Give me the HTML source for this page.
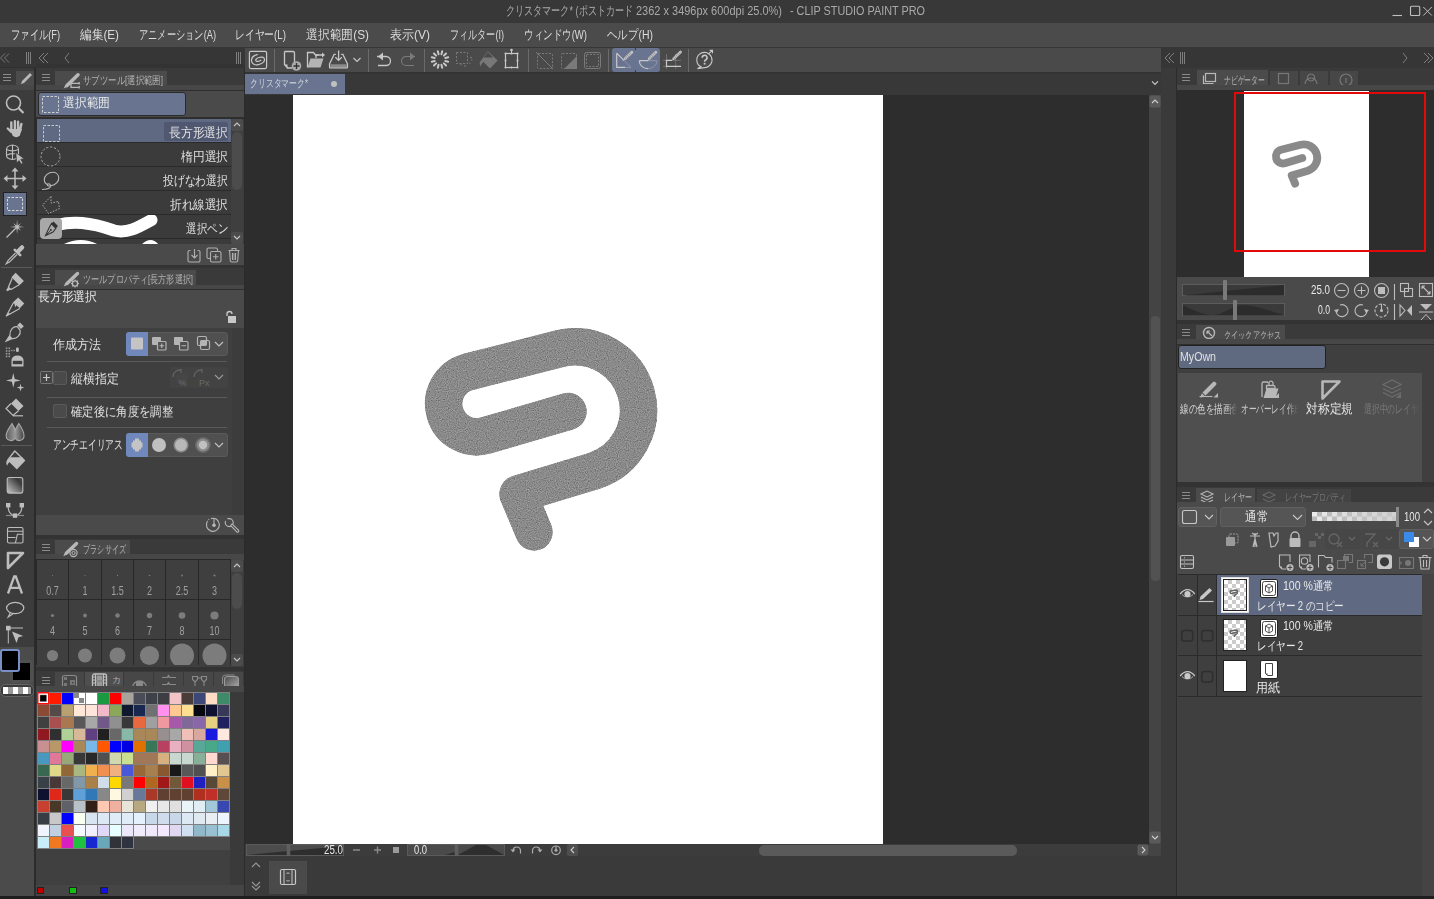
<!DOCTYPE html><html><head><meta charset="utf-8"><style>
*{margin:0;padding:0;box-sizing:border-box}
html,body{width:1434px;height:899px;overflow:hidden;background:#3c3c3c;font-family:"Liberation Sans",sans-serif}
.a{position:absolute}
.t{white-space:nowrap;line-height:1}
</style></head><body><div class="a" style="left:0px;top:0px;width:1434px;height:23px;background:#383838;"></div>
<div id="m1" class="a t" style="left:506px;top:4px;font-size:13px;color:#a9a9a9;transform:scaleX(0.698);transform-origin:0 0;">クリスタマーク* (ポストカード</div>
<div id="m2" class="a t" style="left:636px;top:4px;font-size:13px;color:#a9a9a9;transform:scaleX(0.845);transform-origin:0 0;">2362 x 3496px 600dpi 25.0%)</div>
<div id="m3" class="a t" style="left:790px;top:4px;font-size:13px;color:#a9a9a9;transform:scaleX(0.834);transform-origin:0 0;">- CLIP STUDIO PAINT PRO</div>
<svg class="a" style="left:1380px;top:0px;" width="54" height="23" viewBox="0 0 54 23"><path d="M12.5 15.5h9.5" stroke="#c0c0c0" stroke-width="1.1"/><rect x="30.5" y="6.3" width="9.2" height="9.2" rx="1" fill="none" stroke="#c0c0c0" stroke-width="1.1"/><path d="M43.3 7l8.5 8.5M51.8 7l-8.5 8.5" stroke="#c0c0c0" stroke-width="1"/></svg>
<div class="a" style="left:0px;top:23px;width:1434px;height:24px;background:#4b4b4b;"></div>
<div id="m4" class="a t" style="left:11px;top:28px;font-size:13px;color:#dcdcdc;transform:scaleX(0.714);transform-origin:0 0;">ファイル(F)</div>
<div id="m5" class="a t" style="left:80px;top:28px;font-size:13px;color:#dcdcdc;transform:scaleX(0.900);transform-origin:0 0;">編集(E)</div>
<div id="m6" class="a t" style="left:139px;top:28px;font-size:13px;color:#dcdcdc;transform:scaleX(0.711);transform-origin:0 0;">アニメーション(A)</div>
<div id="m7" class="a t" style="left:235px;top:28px;font-size:13px;color:#dcdcdc;transform:scaleX(0.751);transform-origin:0 0;">レイヤー(L)</div>
<div id="m8" class="a t" style="left:306px;top:28px;font-size:13px;color:#dcdcdc;transform:scaleX(0.909);transform-origin:0 0;">選択範囲(S)</div>
<div id="m9" class="a t" style="left:390px;top:28px;font-size:13px;color:#dcdcdc;transform:scaleX(0.923);transform-origin:0 0;">表示(V)</div>
<div id="m10" class="a t" style="left:450px;top:28px;font-size:13px;color:#dcdcdc;transform:scaleX(0.699);transform-origin:0 0;">フィルター(I)</div>
<div id="m11" class="a t" style="left:524px;top:28px;font-size:13px;color:#dcdcdc;transform:scaleX(0.733);transform-origin:0 0;">ウィンドウ(W)</div>
<div id="m12" class="a t" style="left:607px;top:28px;font-size:13px;color:#dcdcdc;transform:scaleX(0.806);transform-origin:0 0;">ヘルプ(H)</div>
<div class="a" style="left:0px;top:47px;width:1434px;height:21px;background:#363636;"></div>
<div class="a" style="left:0px;top:67px;width:245px;height:1px;background:#2f2f2f;"></div>
<div class="a" style="left:245px;top:48px;width:916px;height:24px;background:#4a4a4a;"></div>
<svg class="a" style="left:0px;top:50px;" width="60" height="16" viewBox="0 0 60 16"><path d="M5 3.5l-4.5 4.5 4.5 4.5M9 3.5l-4.5 4.5 4.5 4.5" fill="none" stroke="#7e7e7e" stroke-width="0.9"/><path d="M26.5 2v12M28.5 2v12M30.5 2v12" stroke="#7e7e7e" stroke-width="1"/><path d="M44 3l-5 5 5 5M48 3l-5 5 5 5" fill="none" stroke="#7e7e7e" stroke-width="1"/></svg>
<svg class="a" style="left:60px;top:50px;" width="20" height="16" viewBox="0 0 20 16"><path d="M9 3l-4 5 4 5" fill="none" stroke="#7e7e7e" stroke-width="1"/></svg>
<svg class="a" style="left:232px;top:50px;" width="14" height="16" viewBox="0 0 14 16"><path d="M4.5 2v12M6.5 2v12M8.5 2v12" stroke="#7e7e7e" stroke-width="1"/></svg>
<svg class="a" style="left:1161px;top:50px;" width="30" height="16" viewBox="0 0 30 16"><path d="M9 3l-5 5 5 5M13 3l-5 5 5 5" fill="none" stroke="#7e7e7e" stroke-width="1"/><path d="M19.5 2v12M21.5 2v12M23.5 2v12" stroke="#7e7e7e" stroke-width="1"/></svg>
<svg class="a" style="left:1396px;top:50px;" width="38" height="16" viewBox="0 0 38 16"><path d="M7 3l4 5-4 5" fill="none" stroke="#7e7e7e" stroke-width="1"/><path d="M28 3l5 5-5 5M32 3l5 5-5 5" fill="none" stroke="#7e7e7e" stroke-width="1"/></svg>
<div class="a" style="left:274px;top:49px;width:1px;height:23px;background:#6a6a6a;"></div>
<div class="a" style="left:368px;top:49px;width:1px;height:23px;background:#6a6a6a;"></div>
<div class="a" style="left:424px;top:49px;width:1px;height:23px;background:#6a6a6a;"></div>
<div class="a" style="left:528px;top:49px;width:1px;height:23px;background:#6a6a6a;"></div>
<div class="a" style="left:608px;top:49px;width:1px;height:23px;background:#6a6a6a;"></div>
<div class="a" style="left:688px;top:49px;width:1px;height:23px;background:#6a6a6a;"></div>
<div class="a" style="left:612px;top:48px;width:48px;height:24px;background:#687490;border-radius:3px;"></div>
<div class="a" style="left:635px;top:48px;width:1px;height:2px;background:#3a3a3a;"></div>
<div class="a" style="left:635px;top:70px;width:1px;height:2px;background:#3a3a3a;"></div>
<svg class="a" style="left:245px;top:47px;" width="30" height="25" viewBox="0 0 30 25"><rect x="4.4" y="4.3" width="17.2" height="17.3" rx="1.5" fill="none" stroke="#c8c8c8" stroke-width="1.2"/><path d="M12.3 7.6C8.5 8.5 6.3 11 6.5 13.8C6.8 16.8 9.5 18.2 12.5 17.8C16.5 17.2 19.8 15 19.5 12.3C19.2 10 16.5 9.6 14 10.5C11.5 11.3 10.2 12.7 11 13.8C11.8 14.8 14.5 14 15.8 13.2" fill="none" stroke="#c8c8c8" stroke-width="1.25" stroke-linecap="round"/></svg>
<svg class="a" style="left:280px;top:47px;" width="22" height="25" viewBox="0 0 22 25"><path d="M4.5 4.5h8.5a1.5 1.5 0 0 1 1.5 1.5v9M4.5 4.5v13l3 3.5h5" fill="none" stroke="#c8c8c8" stroke-width="1.3"/><path d="M4.5 17.5l3 3.5v-3.5z" fill="#c8c8c8"/><circle cx="16.5" cy="19" r="4.8" fill="#aaaaaa"/><path d="M16.5 16v6M13.5 19h6" stroke="#333" stroke-width="1.3"/></svg>
<svg class="a" style="left:304px;top:47px;" width="24" height="25" viewBox="0 0 24 25"><path d="M3.5 20.5v-15h6l2 2.5h3" fill="none" stroke="#c8c8c8" stroke-width="1.3"/><path d="M3.5 20.5l3-9h13l-3 9z" fill="#b4b4b4"/><path d="M12 11v-3h7" fill="none" stroke="#c8c8c8" stroke-width="1.3"/><path d="M18 5.5l3 2.5-3 2.5z" fill="#c8c8c8"/></svg>
<svg class="a" style="left:328px;top:47px;" width="22" height="25" viewBox="0 0 22 25"><path d="M7.8 7.4H6.1L1.5 17v3.3q0 .6.6.6h16.8q.6 0 .6-.6V17L14.9 7.4h-1.7" fill="none" stroke="#c8c8c8" stroke-width="1.2"/><rect x="2.3" y="17.3" width="16.6" height="2.8" fill="#8a8a8a"/><path d="M10.6 3.5v9.5" stroke="#c8c8c8" stroke-width="1.3"/><path d="M7.4 10.2l3.2 3.2 3.2-3.2" fill="none" stroke="#c8c8c8" stroke-width="1.3"/></svg>
<svg class="a" style="left:350px;top:47px;" width="14" height="25" viewBox="0 0 14 25"><path d="M3.5 11l3.5 3.5 3.5-3.5" fill="none" stroke="#c8c8c8" stroke-width="1.1"/></svg>
<svg class="a" style="left:372px;top:47px;" width="24" height="25" viewBox="0 0 24 25"><path d="M5 9.5h9a4.5 4.5 0 0 1 0 9h-8" fill="none" stroke="#c8c8c8" stroke-width="1.3"/><path d="M11 5.5l-5 4 5 4z" fill="#c8c8c8"/></svg>
<svg class="a" style="left:396px;top:47px;" width="24" height="25" viewBox="0 0 24 25"><path d="M19 9.5h-9a4.5 4.5 0 0 0 0 9h8" fill="none" stroke="#7a7a7a" stroke-width="1.1"/><path d="M14 5.5l5 4-5 4z" fill="#7a7a7a"/></svg>
<svg class="a" style="left:428px;top:47px;" width="24" height="25" viewBox="0 0 24 25"><path d="M17.31 13.92L20.21 14.70" stroke="#c8c8c8" stroke-width="2" stroke-linecap="round"/><path d="M15.89 16.39L18.01 18.51" stroke="#c8c8c8" stroke-width="2" stroke-linecap="round"/><path d="M13.42 17.81L14.20 20.71" stroke="#c8c8c8" stroke-width="2" stroke-linecap="round"/><path d="M10.58 17.81L9.80 20.71" stroke="#c8c8c8" stroke-width="2" stroke-linecap="round"/><path d="M8.11 16.39L5.99 18.51" stroke="#c8c8c8" stroke-width="2" stroke-linecap="round"/><path d="M6.69 13.92L3.79 14.70" stroke="#c8c8c8" stroke-width="2" stroke-linecap="round"/><path d="M6.69 11.08L3.79 10.30" stroke="#c8c8c8" stroke-width="2" stroke-linecap="round"/><path d="M8.11 8.61L5.99 6.49" stroke="#c8c8c8" stroke-width="2" stroke-linecap="round"/><path d="M10.58 7.19L9.80 4.29" stroke="#c8c8c8" stroke-width="2" stroke-linecap="round"/><path d="M13.42 7.19L14.20 4.29" stroke="#c8c8c8" stroke-width="2" stroke-linecap="round"/><path d="M15.89 8.61L18.01 6.49" stroke="#c8c8c8" stroke-width="2" stroke-linecap="round"/><path d="M17.31 11.08L20.21 10.30" stroke="#c8c8c8" stroke-width="2" stroke-linecap="round"/></svg>
<svg class="a" style="left:452px;top:47px;" width="24" height="25" viewBox="0 0 24 25"><rect x="4.5" y="5.5" width="11" height="11" fill="none" stroke="#7a7a7a" stroke-dasharray="2 1.5"/><path d="M18 10.5h2M17 15.5l1.5 1.5M13 18v2M9.5 17l-1 1.5M19 13h1.5" stroke="#7a7a7a" stroke-width="1"/></svg>
<svg class="a" style="left:476px;top:47px;" width="24" height="25" viewBox="0 0 24 25"><path d="M11.8 4L21.6 13.6 14 21.6 5.5 13z" fill="#787878"/><path d="M7.8 10.5H17.2L11.8 4.8z" fill="#4a4a4a"/><path d="M6 12.5c-2.5 1.5-3 4.5-1.5 7 0.6-2 1.8-3.6 3.2-4.4z" fill="#787878"/></svg>
<svg class="a" style="left:500px;top:47px;" width="24" height="25" viewBox="0 0 24 25"><rect x="5.5" y="6.5" width="12" height="14" fill="none" stroke="#c8c8c8" stroke-width="1.2"/><path d="M11.5 6.5v-3" stroke="#c8c8c8"/><g fill="#c8c8c8"><circle cx="11.5" cy="3" r="1.3"/><circle cx="5.5" cy="6.5" r="1"/><circle cx="17.5" cy="6.5" r="1"/><circle cx="5.5" cy="20.5" r="1"/><circle cx="17.5" cy="20.5" r="1"/><circle cx="11.5" cy="6.5" r="1"/><circle cx="11.5" cy="20.5" r="1"/><circle cx="5.5" cy="13.5" r="1"/><circle cx="17.5" cy="13.5" r="1"/></g></svg>
<svg class="a" style="left:532px;top:47px;" width="24" height="25" viewBox="0 0 24 25"><rect x="5.5" y="6.5" width="15" height="15" rx="1" fill="none" stroke="#7a7a7a" stroke-dasharray="2 1.5"/><path d="M4 5l17 17" stroke="#7a7a7a" stroke-width="1"/></svg>
<svg class="a" style="left:556px;top:47px;" width="24" height="25" viewBox="0 0 24 25"><rect x="5.5" y="6.5" width="15" height="15" rx="1" fill="none" stroke="#7a7a7a" stroke-dasharray="2 1.5"/><path d="M21 9v13h-13z" fill="#7a7a7a"/></svg>
<svg class="a" style="left:580px;top:47px;" width="24" height="25" viewBox="0 0 24 25"><rect x="4.5" y="5.5" width="16" height="16" rx="2" fill="none" stroke="#7a7a7a"/><rect x="6.5" y="7.5" width="12" height="12" fill="none" stroke="#7a7a7a" stroke-dasharray="2 1.5"/></svg>
<svg class="a" style="left:612px;top:47px;" width="24" height="25" viewBox="0 0 24 25"><path d="M4.7 6.2v14.2h8.3M4.7 6.2l7 7" fill="none" stroke="#c8c8c8" stroke-width="1.2"/><path d="M11.7 13.2l7.3 7.2h-6" fill="none" stroke="#aab" stroke-width="0.6"/><path d="M13.2 11.5L19.8 5.2" stroke="#c8c8c8" stroke-width="2.8" stroke-linecap="round"/><path d="M13.2 11.5L19.8 5.2" stroke="#8a8a8a" stroke-width="2.8" stroke-dasharray="0.6 1.2"/><path d="M12.399999999999999 12.3l-1.5 1.5" stroke="#c8c8c8" stroke-width="1"/></svg>
<svg class="a" style="left:636px;top:47px;" width="24" height="25" viewBox="0 0 24 25"><path d="M3.3 13.7h9M3.3 13.7a8.8 8 0 0 0 8.8 8" fill="none" stroke="#c8c8c8" stroke-width="1.2"/><path d="M12 13.7h8.9a8.8 8 0 0 1-8.8 8" fill="none" stroke="#aab" stroke-width="0.6"/><path d="M13.3 11.5L19.8 5.2" stroke="#c8c8c8" stroke-width="2.8" stroke-linecap="round"/><path d="M13.3 11.5L19.8 5.2" stroke="#8a8a8a" stroke-width="2.8" stroke-dasharray="0.6 1.2"/><path d="M12.5 12.3l-1.5 1.5" stroke="#c8c8c8" stroke-width="1"/></svg>
<svg class="a" style="left:660px;top:47px;" width="24" height="25" viewBox="0 0 24 25"><path d="M6.5 7v15M15.7 7v15M3 13.3h18M3 19.4h18" stroke="#8a8a8a" stroke-width="0.6"/><path d="M12 13.3H6.5v6.1H21" fill="none" stroke="#c8c8c8" stroke-width="1.2"/><path d="M13.8 11.5L20.5 5" stroke="#c8c8c8" stroke-width="2.8" stroke-linecap="round"/><path d="M13.8 11.5L20.5 5" stroke="#8a8a8a" stroke-width="2.8" stroke-dasharray="0.6 1.2"/><path d="M13.0 12.3l-1.5 1.5" stroke="#c8c8c8" stroke-width="1"/></svg>
<svg class="a" style="left:692px;top:47px;" width="24" height="25" viewBox="0 0 24 25"><path d="M9 19.8A7.6 7.6 0 1 1 12.6 20.6L5.5 21.6z" fill="none" stroke="#c8c8c8" stroke-width="1.1"/><path d="M10.2 10.8a2.4 2.4 0 1 1 3.4 2.1c-0.7 0.4-1 0.9-1 1.8" fill="none" stroke="#c8c8c8" stroke-width="1.6"/><rect x="11.7" y="15.8" width="1.8" height="1.8" fill="#c8c8c8"/><path d="M16.2 7.2l4-3.6M17.7 3.4h2.8v2.8" fill="none" stroke="#c8c8c8" stroke-width="1.1"/></svg>
<div class="a" style="left:0px;top:68px;width:34px;height:831px;background:#3c3c3c;"></div>
<div class="a" style="left:0px;top:68px;width:34px;height:17px;background:#3a3a3a;"></div>
<div class="a" style="left:16px;top:71px;width:18px;height:14px;background:#4b4b4b;"></div>
<div class="a" style="left:0px;top:85px;width:34px;height:5px;background:#474747;"></div>
<div class="a" style="left:34px;top:68px;width:2px;height:831px;background:#2b2b2b;"></div>
<div class="a" style="left:36px;top:68px;width:208px;height:831px;background:#3c3c3c;"></div>
<div class="a" style="left:244px;top:68px;width:1px;height:831px;background:#2b2b2b;"></div>
<svg class="a" style="left:3px;top:74px;" width="9" height="8" viewBox="0 0 9 8"><path d="M0 0.5h8M0 3.5h8M0 6.5h8" stroke="#8a8a8a" stroke-width="1"/></svg>
<svg class="a" style="left:16px;top:71px;" width="18" height="14" viewBox="0 0 18 14"><path d="M5 13l1-3 8-8 2 2-8 8z" fill="#b8b8b8"/></svg>
<svg class="a" style="left:0px;top:90px;" width="34" height="28" viewBox="0 0 34 28"><circle cx="13.5" cy="13" r="7" fill="none" stroke="#bdbdbd" stroke-width="1.6"/><path d="M18.5 18l5 5" stroke="#bdbdbd" stroke-width="2.2"/></svg>
<svg class="a" style="left:0px;top:116px;" width="34" height="24" viewBox="0 0 34 24"><g stroke="#bdbdbd" stroke-width="2.4" stroke-linecap="round"><path d="M11.3 6.5v8M14.9 5.2v8M18.1 5.7v8M21.4 8l-1.5 6.5M7.8 12.5l3.5 3.5"/></g><path d="M10 13h12l-2.2 6.5q-1.5 1.8-3.6 1.8t-3.6-1.8z" fill="#bdbdbd"/></svg>
<svg class="a" style="left:0px;top:141px;" width="34" height="26" viewBox="0 0 34 26"><g fill="none" stroke="#bdbdbd" stroke-width="1.1"><path d="M6.5 8.5Q6.5 4.8 12.5 4Q18.5 4.8 18.5 8.5V14.5Q18.5 17.8 12.5 18.5Q6.5 17.8 6.5 14.5Z"/><path d="M12.5 4V18.5M6.5 8.5Q12.5 11.2 18.5 8.5M7 14Q11 12.2 15 12.8"/></g><path d="M15.8 11.5L24.2 17.8 20.8 18.4 23 22 21.2 23.2 19 19.6 16.6 22z" fill="#bdbdbd" stroke="#3c3c3c" stroke-width="0.8"/></svg>
<svg class="a" style="left:0px;top:166px;" width="34" height="26" viewBox="0 0 34 26"><path d="M15 3v19M5 12.5h20" stroke="#bdbdbd" stroke-width="1.5"/><path d="M15 1.5l-3.5 4h7zM15 23.5l-3.5-4h7zM3.5 12.5l4-3.5v7zM26.5 12.5l-4-3.5v7z" fill="#bdbdbd"/></svg>
<div class="a" style="left:3px;top:192px;width:24px;height:24px;background:#687490;border:1px solid #222;"></div>
<svg class="a" style="left:3px;top:192px;" width="24" height="24" viewBox="0 0 24 24"><rect x="4.5" y="5.5" width="15" height="13" fill="none" stroke="#d8d8d8" stroke-dasharray="2.5 1.5"/></svg>
<svg class="a" style="left:0px;top:217px;" width="34" height="26" viewBox="0 0 34 26"><path d="M6.5 20.5l8.5-8.5" stroke="#bdbdbd" stroke-width="1.3"/><polygon points="17.10,2.70 17.71,8.42 21.06,5.94 18.58,9.29 24.30,9.90 18.58,10.51 21.06,13.86 17.71,11.38 17.10,17.10 16.49,11.38 13.14,13.86 15.62,10.51 9.90,9.90 15.62,9.29 13.14,5.94 16.49,8.42" fill="#bdbdbd"/></svg>
<svg class="a" style="left:0px;top:242px;" width="34" height="26" viewBox="0 0 34 26"><path d="M18 9.5l4-4" stroke="#bdbdbd" stroke-width="4.5" stroke-linecap="round"/><path d="M14.8 7.8l5.4 5.4" stroke="#bdbdbd" stroke-width="2.6" stroke-linecap="round"/><path d="M15.5 11L8.2 18.3 6.3 21.7 9.7 19.8 17 12.5" fill="none" stroke="#bdbdbd" stroke-width="1.2"/></svg>
<div class="a" style="left:1px;top:267px;width:31px;height:1px;background:#5a5a5a;"></div>
<svg class="a" style="left:0px;top:269px;" width="34" height="25" viewBox="0 0 34 25"><path d="M15.6 3.8L23.9 12 19.5 16.2 11.4 8.2z" fill="#bdbdbd"/><path d="M12.2 9.3L8.4 18.2 11 20.4 19.2 15.8" fill="none" stroke="#bdbdbd" stroke-width="1.2"/><path d="M8.2 18L6.2 21 7.2 22.2 10.8 20.6z" fill="#bdbdbd"/></svg>
<svg class="a" style="left:0px;top:294px;" width="34" height="25" viewBox="0 0 34 25"><path d="M18.2 3.5L24.3 9.6 19.8 14.2 16.4 11.2 15.2 13.2 14.4 9.8 12.8 8.6z" fill="#bdbdbd"/><path d="M13.4 8.8L6.3 22 19.8 14.4" fill="none" stroke="#bdbdbd" stroke-width="1.2" stroke-linejoin="round"/><path d="M8.5 18.5L6.3 22 10 20z" fill="#bdbdbd"/></svg>
<svg class="a" style="left:0px;top:319px;" width="34" height="25" viewBox="0 0 34 25"><path d="M20 3.5l3.8 3.8-2.8 2.8-3.8-3.8z" fill="#bdbdbd"/><path d="M17.5 7.8c-4-1-8 3-7.6 8.5l-3.8 5.8 6.2-2.6c5 0.4 8.7-4 7.8-8.2z" fill="none" stroke="#bdbdbd" stroke-width="1.2"/><path d="M9.8 16.4l-3.8 5.8 6.4-2.7-1-1.6z" fill="#bdbdbd"/></svg>
<svg class="a" style="left:0px;top:344px;" width="34" height="25" viewBox="0 0 34 25"><g fill="#9a9a9a"><rect x="5.8" y="3.5" width="1.6" height="1.6"/><rect x="8.5" y="3.5" width="1.6" height="1.6"/><rect x="5.8" y="6.2" width="1.6" height="1.6"/><rect x="8.5" y="6.2" width="1.6" height="1.6"/><rect x="5.8" y="8.9" width="1.6" height="1.6"/><rect x="8.5" y="8.9" width="1.6" height="1.6"/><rect x="5.8" y="11.6" width="1.6" height="1.6"/><rect x="8.5" y="11.6" width="1.6" height="1.6"/><rect x="11.2" y="5.8" width="1.4" height="1.4"/><rect x="13.5" y="5.8" width="1.4" height="1.4"/></g><rect x="16" y="3.5" width="2.8" height="4.5" rx="1.2" fill="#bdbdbd"/><path d="M11.5 22.5V16a6 4.5 0 0 1 12 0v6.5z" fill="#bdbdbd"/><rect x="12.8" y="16.8" width="9.4" height="3.4" fill="#3c3c3c"/></svg>
<svg class="a" style="left:0px;top:369px;" width="34" height="26" viewBox="0 0 34 26"><polygon points="13.30,4.00 14.71,9.99 20.70,11.40 14.71,12.81 13.30,18.80 11.89,12.81 5.90,11.40 11.89,9.99" fill="#bdbdbd"/><polygon points="20.50,14.80 21.35,17.75 24.30,18.60 21.35,19.45 20.50,22.40 19.65,19.45 16.70,18.60 19.65,17.75" fill="#bdbdbd"/></svg>
<svg class="a" style="left:0px;top:394px;" width="34" height="25" viewBox="0 0 34 25"><path d="M16 4.5L23.5 12 18.5 17 11 9.5z" fill="#bdbdbd"/><path d="M11 9.5L6 14.5 13 21.5 18.5 16.8" fill="none" stroke="#bdbdbd" stroke-width="1.2"/><path d="M13 21.8h10" stroke="#bdbdbd" stroke-width="1.2"/></svg>
<svg class="a" style="left:0px;top:419px;" width="34" height="26" viewBox="0 0 34 26"><defs><linearGradient id="bl" x1="0" x2="1"><stop offset="0" stop-color="#5a5a5a"/><stop offset="0.5" stop-color="#999"/><stop offset="1" stop-color="#444"/></linearGradient></defs><path d="M6.2 16.5C6.2 12.5 9.5 8.5 12 4.5C13.5 7.5 15 9.5 15.2 11C15.8 9.5 17 7.5 18.8 4.5C21.5 8.5 24 12.5 24 16.5A4.8 4.8 0 0 1 15.1 19.2A4.8 4.8 0 0 1 6.2 16.5z" fill="url(#bl)" stroke="#a8a8a8" stroke-width="1.1"/></svg>
<div class="a" style="left:1px;top:445px;width:31px;height:1px;background:#5a5a5a;"></div>
<svg class="a" style="left:0px;top:446px;" width="34" height="26" viewBox="0 0 34 26"><path d="M14.8 5L24.5 14.5 16.8 22.5 8 13.7z" fill="none" stroke="#bdbdbd" stroke-width="1.3" stroke-linejoin="round"/><path d="M10.6 11.3H22.2L24.5 14.5 16.8 22.5 8 13.7z" fill="#bdbdbd"/><path d="M8.5 13c-2.5 1.5-2.8 4.5-1.4 6.8 0.6-2 1.8-3.6 3.2-4.4z" fill="#bdbdbd"/></svg>
<svg class="a" style="left:0px;top:472px;" width="34" height="26" viewBox="0 0 34 26"><defs><linearGradient id="gr" x1="0" y1="1" x2="1" y2="0"><stop offset="0" stop-color="#c8c8c8"/><stop offset="0.75" stop-color="#3a3a3a"/><stop offset="1" stop-color="#505050"/></linearGradient></defs><rect x="7.2" y="5.5" width="15.6" height="15.6" rx="2" fill="url(#gr)" stroke="#bdbdbd" stroke-width="1.1"/></svg>
<svg class="a" style="left:0px;top:497px;" width="34" height="26" viewBox="0 0 34 26"><path d="M8.2 10c0 5 3 8.5 6.8 8.8 3.8-0.3 6.8-3.8 6.8-8.8" fill="none" stroke="#bdbdbd" stroke-width="1.2"/><rect x="6" y="6" width="4.4" height="4.4" fill="#bdbdbd"/><rect x="19.6" y="6" width="4.4" height="4.4" fill="#bdbdbd"/><path d="M6 18.5h18" stroke="#8a8a8a" stroke-width="1.2"/><rect x="12.8" y="16.4" width="4.4" height="4.4" fill="#bdbdbd"/></svg>
<svg class="a" style="left:0px;top:522px;" width="34" height="26" viewBox="0 0 34 26"><rect x="7.5" y="5.5" width="15.5" height="15.5" rx="1.5" fill="none" stroke="#bdbdbd" stroke-width="1.1"/><path d="M7.5 9.2h15.5M7.5 15.5h8M16.8 12.2h6.2M17.4 12.2l-2 8.8" fill="none" stroke="#bdbdbd" stroke-width="1.1"/></svg>
<svg class="a" style="left:0px;top:547px;" width="34" height="26" viewBox="0 0 34 26"><path d="M8 6h15L8 21z" fill="none" stroke="#bdbdbd" stroke-width="2.6" stroke-linejoin="round"/></svg>
<svg class="a" style="left:0px;top:572px;" width="34" height="26" viewBox="0 0 34 26"><path d="M8 21.5L14.2 4.5h1.6L22 21.5M10.4 15.8h9.2" fill="none" stroke="#bdbdbd" stroke-width="2.3"/></svg>
<svg class="a" style="left:0px;top:597px;" width="34" height="25" viewBox="0 0 34 25"><ellipse cx="15.2" cy="11" rx="8.6" ry="5.6" fill="none" stroke="#bdbdbd" stroke-width="1.2"/><path d="M10.5 15.5L8.2 20 13.5 16.5" fill="none" stroke="#bdbdbd" stroke-width="1.2"/></svg>
<svg class="a" style="left:0px;top:622px;" width="34" height="25" viewBox="0 0 34 25"><rect x="6" y="3.8" width="4.6" height="4.6" fill="#bdbdbd"/><path d="M8.3 6h14.7M8.3 6v15.5" stroke="#bdbdbd" stroke-width="1"/><path d="M12 9.5L23.2 14 18.5 15.2 16.5 21z" fill="#bdbdbd"/></svg>
<div class="a" style="left:0px;top:647px;width:34px;height:249px;background:#4b4b4b;"></div>
<div class="a" style="left:10px;top:660px;width:23px;height:23px;background:#000;border:3px solid #505050;border-radius:3px;"></div>
<div class="a" style="left:0px;top:649px;width:20px;height:23px;background:#000;border:2px solid #7890c8;border-radius:3px;"></div>
<svg class="a" style="left:0px;top:684px;" width="34" height="13" viewBox="0 0 34 13"><rect x="0.5" y="0.5" width="33" height="12" rx="5" fill="#3a3a3a" stroke="#666"/><g fill="#fff"><rect x="3" y="3" width="5" height="7"/><rect x="13" y="3" width="5" height="7"/><rect x="23" y="3" width="5" height="7"/></g><g fill="#999"><rect x="8" y="3" width="5" height="7"/><rect x="18" y="3" width="5" height="7"/><rect x="28" y="3" width="3" height="7"/></g></svg>
<div class="a" style="left:36px;top:64px;width:208px;height:4px;background:#333333;"></div>
<div class="a" style="left:36px;top:68px;width:208px;height:17px;background:#3a3a3a;"></div>
<svg class="a" style="left:42px;top:74px;" width="9" height="8" viewBox="0 0 9 8"><path d="M0 0.5h8M0 3.5h8M0 6.5h8" stroke="#8a8a8a" stroke-width="1"/></svg>
<div class="a" style="left:36px;top:85px;width:208px;height:5px;background:#474747;"></div>
<div class="a" style="left:55px;top:71px;width:112px;height:14px;background:#4b4b4b;"></div>
<svg class="a" style="left:58px;top:71px;" width="24" height="18" viewBox="0 0 24 18"><path d="M9 14.5L20 3.8" stroke="#b8b8b8" stroke-width="3.6" stroke-linecap="round"/><path d="M5.6 17.6L7.5 13.8 9.6 15.8z" fill="#b8b8b8"/><path d="M13 12.3h8.5M13 16.3h8.5M21.2 11v2.6M21.2 15v2.6M13 12v5" stroke="#b8b8b8" stroke-width="1.3"/></svg>
<div id="m13" class="a t" style="left:83px;top:75px;font-size:10.5px;color:#b4b4b4;transform:scaleX(0.763);transform-origin:0 0;">サブツール[選択範囲]</div>
<div class="a" style="left:36px;top:90px;width:208px;height:27px;background:#4a4a4a;"></div>
<div class="a" style="left:36px;top:90px;width:208px;height:1px;background:#2e2e2e;"></div>
<div class="a" style="left:38px;top:92px;width:148px;height:24px;background:#687490;border:1px solid #2a2a2a;border-radius:3px;"></div>
<svg class="a" style="left:42px;top:96px;" width="17" height="17" viewBox="0 0 17 17"><rect x="0.5" y="0.5" width="16" height="16" fill="none" stroke="#d0d0d0" stroke-dasharray="2.5 1.5"/></svg>
<div id="m14" class="a t" style="left:63px;top:96px;font-size:13px;color:#e8e8e8;transform:scaleX(0.904);transform-origin:0 0;">選択範囲</div>
<div class="a" style="left:36px;top:117px;width:208px;height:2px;background:#2e2e2e;"></div>
<div class="a" style="left:36px;top:119px;width:195px;height:125px;background:#2a2a2a;"></div>
<div class="a" style="left:37px;top:119px;width:194px;height:23px;background:#5f6a82;"></div>
<div class="a" style="left:164px;top:122px;width:64px;height:19px;background:#4f5870;border-radius:2px;"></div>
<div id="m15" class="a t" style="left:169px;top:127px;font-size:12.5px;color:#e0e0e0;transform:scaleX(0.908);transform-origin:0 0;">長方形選択</div>
<div class="a" style="left:37px;top:143px;width:194px;height:23px;background:#3b3b3b;"></div>
<div id="m16" class="a t" style="left:181px;top:151px;font-size:12.5px;color:#e0e0e0;transform:scaleX(0.904);transform-origin:0 0;">楕円選択</div>
<div class="a" style="left:37px;top:167px;width:194px;height:23px;background:#3b3b3b;"></div>
<div id="m17" class="a t" style="left:163px;top:175px;font-size:12.5px;color:#e0e0e0;transform:scaleX(0.833);transform-origin:0 0;">投げなわ選択</div>
<div class="a" style="left:37px;top:191px;width:194px;height:23px;background:#3b3b3b;"></div>
<div id="m18" class="a t" style="left:170px;top:199px;font-size:12.5px;color:#e0e0e0;transform:scaleX(0.892);transform-origin:0 0;">折れ線選択</div>
<div class="a" style="left:37px;top:215px;width:194px;height:23px;background:#3b3b3b;"></div>
<div id="m19" class="a t" style="left:186px;top:223px;font-size:12.5px;color:#e0e0e0;transform:scaleX(0.808);transform-origin:0 0;">選択ペン</div>
<div class="a" style="left:37px;top:239px;width:194px;height:5px;background:#3b3b3b;"></div>
<svg class="a" style="left:40px;top:122px;" width="22" height="20" viewBox="0 0 22 20"><rect x="3.5" y="3.5" width="16" height="16" fill="none" stroke="#c8c8c8" stroke-dasharray="2.5 1.5"/></svg>
<svg class="a" style="left:40px;top:146px;" width="22" height="22" viewBox="0 0 22 22"><circle cx="10.5" cy="10.5" r="9.5" fill="none" stroke="#aaa" stroke-dasharray="2.3 1.7"/></svg>
<svg class="a" style="left:40px;top:170px;" width="24" height="22" viewBox="0 0 24 22"><path d="M2 19.5C6 19.5 9.5 18.8 10.5 16.8C11.5 14.6 8.8 12.9 7.6 14.4C6.5 15.9 9.2 16.2 11 15.8C15.5 14.8 19 11.5 18.8 7.8C18.5 4 15.5 2.3 12.8 2.3C8.5 2.3 4.5 5.5 4.3 9.5C4.2 12 5.5 13.8 7.6 14.4" fill="none" stroke="#b8b8b8" stroke-width="1.1"/></svg>
<svg class="a" style="left:40px;top:194px;" width="24" height="22" viewBox="0 0 24 22"><path d="M11 2.5V9L18.5 7.5 19.5 14.5 8.5 19.5 2.5 11z" fill="none" stroke="#aaa" stroke-width="1" stroke-dasharray="1.6 1.4"/></svg>
<div class="a" style="left:37px;top:215px;width:194px;height:29px;overflow:hidden">
<svg class="a" style="left:0;top:0" width="194" height="29" viewBox="0 0 194 29"><path d="M20 10C36 6 52 7 77 15.5C90 19 102 12 114.5 5" fill="none" stroke="#fff" stroke-width="12" stroke-linecap="round"/><path d="M25 30Q44 20 62 30zM104 30Q114 20 122 30z" fill="#fff"/><rect x="3" y="3" width="22" height="21" rx="4" fill="#a8a8a8"/><path d="M3 18l7-7" stroke="#c0c0c0" stroke-width="0"/><path d="M16.5 6.5l4.5 4.5-2.5 2.5-4.5-4.5z" fill="#333"/><path d="M14.5 8.5l4.5 4.5-3 4-7.5 3.5 3.5-7.5z" fill="none" stroke="#333" stroke-width="1.1"/><path d="M8.5 20.5l5-5" stroke="#333" stroke-width="0.9"/><circle cx="13.8" cy="15" r="1" fill="#333"/></svg>
</div>
<div class="a" style="left:231px;top:119px;width:12px;height:125px;background:#3f3f3f;"></div>
<svg class="a" style="left:231px;top:119px;" width="12" height="12" viewBox="0 0 12 12"><rect x="0" y="0" width="12" height="12" rx="2" fill="#4c4c4c"/><path d="M3 7l3-3 3 3" fill="none" stroke="#c8c8c8" stroke-width="1.1"/></svg>
<div class="a" style="left:232px;top:132px;width:10px;height:58px;background:#4c4c4c;border-radius:5px;"></div>
<svg class="a" style="left:231px;top:232px;" width="12" height="12" viewBox="0 0 12 12"><rect x="0" y="0" width="12" height="12" rx="2" fill="#4c4c4c"/><path d="M3 4l3 3 3-3" fill="none" stroke="#c8c8c8" stroke-width="1.1"/></svg>
<div class="a" style="left:36px;top:244px;width:208px;height:21px;background:#4a4a4a;"></div>
<svg class="a" style="left:186px;top:247px;" width="56" height="18" viewBox="0 0 56 18"><g fill="none" stroke="#b0b0b0" stroke-width="1.1"><path d="M4.5 3.5h-1a1.5 1.5 0 0 0-1.5 1.5v8.5a1.5 1.5 0 0 0 1.5 1.5h9a1.5 1.5 0 0 0 1.5-1.5V5a1.5 1.5 0 0 0-1.5-1.5h-1"/><path d="M8.5 2v9M5.5 8l3 3 3-3"/><path d="M24 11.5h-1.5a1.5 1.5 0 0 1-1.5-1.5V2.5a1.5 1.5 0 0 1 1.5-1.5h7.5a1.5 1.5 0 0 1 1.5 1.5V4"/><rect x="24.5" y="4.5" width="10.5" height="10.5" rx="1.5"/><path d="M29.75 7v5.5M27 9.75h5.5"/><path d="M42.5 3.5h11M46 3.5V1.5h4v2M43.5 3.5l0.8 10a1.5 1.5 0 0 0 1.5 1.5h4.4a1.5 1.5 0 0 0 1.5-1.5l0.8-10M46.5 6v7M49.5 6v7"/></g><rect x="47.3" y="6" width="1.4" height="7" fill="#888"/></svg>
<div class="a" style="left:36px;top:265px;width:208px;height:4px;background:#333333;"></div>
<div class="a" style="left:36px;top:268px;width:208px;height:17px;background:#3a3a3a;"></div>
<svg class="a" style="left:42px;top:274px;" width="9" height="8" viewBox="0 0 9 8"><path d="M0 0.5h8M0 3.5h8M0 6.5h8" stroke="#8a8a8a" stroke-width="1"/></svg>
<div class="a" style="left:36px;top:285px;width:208px;height:5px;background:#474747;"></div>
<div class="a" style="left:55px;top:270px;width:141px;height:15px;background:#4b4b4b;"></div>
<svg class="a" style="left:58px;top:270px;" width="24" height="18" viewBox="0 0 24 18"><path d="M9 13.5L19.5 3.5" stroke="#b8b8b8" stroke-width="3.4" stroke-linecap="round"/><path d="M5.6 16.6L7.5 12.8 9.6 14.8z" fill="#b8b8b8"/><circle cx="17" cy="13.5" r="2.6" fill="none" stroke="#b8b8b8" stroke-width="1.4"/><path d="M17 9.5v1.2M17 16.3v1.2M13 13.5h1.2M19.8 13.5h1.2M14.2 10.7l.8.8M19 15.5l.8.8M14.2 16.3l.8-.8M19 11.5l.8-.8" stroke="#b8b8b8" stroke-width="1.2"/></svg>
<div id="m20" class="a t" style="left:83px;top:274px;font-size:10.5px;color:#b4b4b4;transform:scaleX(0.739);transform-origin:0 0;">ツールプロパティ[長方形選択]</div>
<div class="a" style="left:36px;top:290px;width:208px;height:38px;background:#4a4a4a;"></div>
<div class="a" style="left:36px;top:289px;width:208px;height:1px;background:#2e2e2e;"></div>
<div id="m21" class="a t" style="left:38px;top:290px;font-size:13px;color:#e8e8e8;transform:scaleX(0.908);transform-origin:0 0;">長方形選択</div>
<svg class="a" style="left:223px;top:310px;" width="14" height="14" viewBox="0 0 14 14"><path d="M4 6V4a2.5 2.5 0 0 1 5 0" fill="none" stroke="#c8c8c8" stroke-width="1.3"/><rect x="5" y="6" width="8" height="7" fill="#c8c8c8"/></svg>
<div class="a" style="left:36px;top:328px;width:208px;height:187px;background:#3f3f3f;"></div>
<div class="a" style="left:232px;top:328px;width:11px;height:187px;background:#3c3c3c;"></div>
<div id="m22" class="a t" style="left:53px;top:338px;font-size:13px;color:#e0e0e0;transform:scaleX(0.923);transform-origin:0 0;">作成方法</div>
<div class="a" style="left:126px;top:332px;width:102px;height:24px;background:#505050;border:1px solid #5a5a5a;border-radius:3px;"></div>
<div class="a" style="left:126px;top:332px;width:22px;height:24px;background:#7088bb;border-radius:3px 0 0 3px;"></div>
<svg class="a" style="left:126px;top:332px;" width="102" height="24" viewBox="0 0 102 24"><rect x="5" y="5.5" width="12" height="12" rx="1" fill="#c4c4c4"/><g fill="#b4b4b4"><rect x="26" y="5" width="9" height="8" rx="1"/><rect x="48" y="5" width="9" height="8" rx="1"/></g><g stroke="#b4b4b4" stroke-width="1.2"><rect x="31.5" y="9.5" width="8.5" height="8.5" rx="1" fill="#505050"/><rect x="53.5" y="9.5" width="8.5" height="8.5" rx="1" fill="#505050"/><path d="M35.75 11.5v4.5M33.5 13.75h4.5M55.5 13.75h4.5" fill="none"/><rect x="71.5" y="4.5" width="9" height="9" rx="1.5" fill="none"/><rect x="74.5" y="8.5" width="9" height="9" rx="1.5" fill="none"/></g><rect x="74.5" y="8.5" width="6" height="5" fill="#b4b4b4"/><path d="M89 10l4 4 4-4" fill="none" stroke="#c0c0c0" stroke-width="1.2"/></svg>
<div class="a" style="left:47px;top:361px;width:180px;height:1px;background:#5a5a5a;"></div>
<svg class="a" style="left:40px;top:371px;" width="14" height="14" viewBox="0 0 14 14"><rect x="0.5" y="0.5" width="12" height="12" rx="1" fill="#444" stroke="#777"/><path d="M6.5 3v7M3 6.5h7" stroke="#ccc" stroke-width="1.2"/></svg>
<div class="a" style="left:53px;top:371px;width:14px;height:14px;background:#4a4a4a;border:1px solid #5a5a5a;border-radius:2px;"></div>
<div id="m23" class="a t" style="left:71px;top:372px;font-size:13px;color:#e0e0e0;transform:scaleX(0.923);transform-origin:0 0;">縦横指定</div>
<div class="a" style="left:170px;top:367px;width:58px;height:21px;background:#434343;border-radius:2px;"></div>
<svg class="a" style="left:170px;top:367px;" width="58" height="21" viewBox="0 0 58 21"><g fill="none" stroke="#666" stroke-width="1.1"><path d="M3 10a7 7 0 0 1 8-7M11 2v4"/><path d="M24 10a7 7 0 0 1 8-7M32 2v4"/><path d="M45 8l4 4 4-4" stroke="#999"/></g><circle cx="12" cy="12" r="6" fill="#4a4a4a" opacity="0.6"/><text x="8.5" y="18.5" font-size="9" font-family="Liberation Sans" fill="#6a6a6a">%</text><text x="29" y="19" font-size="9" font-family="Liberation Sans" fill="#6a6a6a">Px</text></svg>
<div class="a" style="left:47px;top:397px;width:180px;height:1px;background:#5a5a5a;"></div>
<div class="a" style="left:53px;top:404px;width:14px;height:14px;background:#4a4a4a;border:1px solid #5a5a5a;border-radius:2px;"></div>
<div id="m24" class="a t" style="left:71px;top:405px;font-size:13px;color:#e0e0e0;transform:scaleX(0.872);transform-origin:0 0;">確定後に角度を調整</div>
<div class="a" style="left:47px;top:427px;width:180px;height:1px;background:#5a5a5a;"></div>
<div id="m25" class="a t" style="left:53px;top:438px;font-size:13px;color:#e0e0e0;transform:scaleX(0.673);transform-origin:0 0;">アンチエイリアス</div>
<div class="a" style="left:126px;top:433px;width:102px;height:24px;background:#505050;border:1px solid #5a5a5a;border-radius:3px;"></div>
<div class="a" style="left:126px;top:433px;width:22px;height:24px;background:#7088bb;border-radius:3px 0 0 3px;"></div>
<svg class="a" style="left:126px;top:433px;" width="102" height="24" viewBox="0 0 102 24"><path d="M9 5.5h4v2h2v2h1.5v5H15v2h-2v2H9v-2H7v-2H5.5v-5H7v-2h2z" fill="#c4c4c4"/><circle cx="33" cy="12" r="7" fill="#c0c0c0"/><circle cx="55" cy="12" r="7.5" fill="#8a8a8a"/><circle cx="55" cy="12" r="6" fill="#b8b8b8"/><circle cx="77" cy="12" r="8" fill="#666"/><circle cx="77" cy="12" r="6.5" fill="#8a8a8a"/><circle cx="77" cy="12" r="4.2" fill="#c0c0c0"/><path d="M89 10l4 4 4-4" fill="none" stroke="#c0c0c0" stroke-width="1.2"/></svg>
<div class="a" style="left:36px;top:515px;width:208px;height:20px;background:#4a4a4a;"></div>
<svg class="a" style="left:203px;top:515px;" width="40" height="20" viewBox="0 0 40 20"><g fill="none" stroke="#b8b8b8" stroke-width="1.1"><path d="M8 3.6A6.5 6.5 0 1 1 4.3 6.5"/><path d="M11 3.5v6.5"/><path d="M5.5 4.8l.6-.5M4.3 6.5l.4-.6" stroke-width="1.3"/><circle cx="26.2" cy="7.6" r="4"/><path d="M29 10.4l5.6 5.6" stroke-width="3.4" stroke-linecap="round"/></g><path d="M29 10.4l5.6 5.6" stroke="#4a4a4a" stroke-width="1.2" stroke-linecap="round"/><path d="M22.6 4l3 3" stroke="#4a4a4a" stroke-width="2.6"/><circle cx="26.2" cy="7.6" r="2.2" fill="#4a4a4a"/><circle cx="11" cy="10.2" r="1.8" fill="#b8b8b8"/></svg>
<div class="a" style="left:36px;top:535px;width:208px;height:4px;background:#333333;"></div>
<div class="a" style="left:36px;top:539px;width:208px;height:15px;background:#3a3a3a;"></div>
<svg class="a" style="left:42px;top:544px;" width="9" height="8" viewBox="0 0 9 8"><path d="M0 0.5h8M0 3.5h8M0 6.5h8" stroke="#8a8a8a" stroke-width="1"/></svg>
<div class="a" style="left:36px;top:554px;width:208px;height:6px;background:#474747;"></div>
<div class="a" style="left:55px;top:540px;width:75px;height:14px;background:#4b4b4b;"></div>
<svg class="a" style="left:58px;top:540px;" width="22" height="18" viewBox="0 0 22 18"><path d="M8.5 13L18.5 3.5" stroke="#b8b8b8" stroke-width="3.4" stroke-linecap="round"/><path d="M5.2 16.2L7 12.4 9.1 14.4z" fill="#b8b8b8"/><circle cx="15.5" cy="13" r="3.6" fill="#4b4b4b" stroke="#b8b8b8" stroke-width="1.1"/><circle cx="15.5" cy="13" r="1.6" fill="none" stroke="#b8b8b8" stroke-width="1"/></svg>
<div id="m26" class="a t" style="left:83px;top:544px;font-size:10.5px;color:#b4b4b4;transform:scaleX(0.652);transform-origin:0 0;">ブラシサイズ</div>
<div class="a" style="left:36px;top:559px;width:195px;height:108px;background:#282828;"></div>
<div class="a" style="left:37px;top:560px;width:31px;height:39px;background:#3f3f3f;"></div>
<svg class="a" style="left:37px;top:560px;" width="31" height="20" viewBox="0 0 31 20"><circle cx="15.50" cy="15.5" r="0.60" fill="#7c7c7c"/></svg>
<div class="a t" style="left:37px;top:585px;font-size:12.5px;color:#a0a0a0;width:31px;text-align:center;transform:scaleX(0.72);transform-origin:15.5px 0;">0.7</div>
<div class="a" style="left:69px;top:560px;width:32px;height:39px;background:#3f3f3f;"></div>
<svg class="a" style="left:69px;top:560px;" width="32" height="20" viewBox="0 0 32 20"><circle cx="16.00" cy="15.5" r="0.60" fill="#7c7c7c"/></svg>
<div class="a t" style="left:69px;top:585px;font-size:12.5px;color:#a0a0a0;width:32px;text-align:center;transform:scaleX(0.72);transform-origin:16.0px 0;">1</div>
<div class="a" style="left:102px;top:560px;width:31px;height:39px;background:#3f3f3f;"></div>
<svg class="a" style="left:102px;top:560px;" width="31" height="20" viewBox="0 0 31 20"><circle cx="15.50" cy="15.5" r="0.70" fill="#7c7c7c"/></svg>
<div class="a t" style="left:102px;top:585px;font-size:12.5px;color:#a0a0a0;width:31px;text-align:center;transform:scaleX(0.72);transform-origin:15.5px 0;">1.5</div>
<div class="a" style="left:134px;top:560px;width:31px;height:39px;background:#3f3f3f;"></div>
<svg class="a" style="left:134px;top:560px;" width="31" height="20" viewBox="0 0 31 20"><circle cx="15.50" cy="15.5" r="0.80" fill="#7c7c7c"/></svg>
<div class="a t" style="left:134px;top:585px;font-size:12.5px;color:#a0a0a0;width:31px;text-align:center;transform:scaleX(0.72);transform-origin:15.5px 0;">2</div>
<div class="a" style="left:166px;top:560px;width:32px;height:39px;background:#3f3f3f;"></div>
<svg class="a" style="left:166px;top:560px;" width="32" height="20" viewBox="0 0 32 20"><circle cx="16.00" cy="15.5" r="0.90" fill="#7c7c7c"/></svg>
<div class="a t" style="left:166px;top:585px;font-size:12.5px;color:#a0a0a0;width:32px;text-align:center;transform:scaleX(0.72);transform-origin:16.0px 0;">2.5</div>
<div class="a" style="left:199px;top:560px;width:31px;height:39px;background:#3f3f3f;"></div>
<svg class="a" style="left:199px;top:560px;" width="31" height="20" viewBox="0 0 31 20"><circle cx="15.50" cy="15.5" r="1.10" fill="#7c7c7c"/></svg>
<div class="a t" style="left:199px;top:585px;font-size:12.5px;color:#a0a0a0;width:31px;text-align:center;transform:scaleX(0.72);transform-origin:15.5px 0;">3</div>
<div class="a" style="left:37px;top:600px;width:31px;height:39px;background:#3f3f3f;"></div>
<svg class="a" style="left:37px;top:600px;" width="31" height="20" viewBox="0 0 31 20"><circle cx="15.50" cy="15.5" r="1.60" fill="#7c7c7c"/></svg>
<div class="a t" style="left:37px;top:625px;font-size:12.5px;color:#a0a0a0;width:31px;text-align:center;transform:scaleX(0.72);transform-origin:15.5px 0;">4</div>
<div class="a" style="left:69px;top:600px;width:32px;height:39px;background:#3f3f3f;"></div>
<svg class="a" style="left:69px;top:600px;" width="32" height="20" viewBox="0 0 32 20"><circle cx="16.00" cy="15.5" r="1.90" fill="#7c7c7c"/></svg>
<div class="a t" style="left:69px;top:625px;font-size:12.5px;color:#a0a0a0;width:32px;text-align:center;transform:scaleX(0.72);transform-origin:16.0px 0;">5</div>
<div class="a" style="left:102px;top:600px;width:31px;height:39px;background:#3f3f3f;"></div>
<svg class="a" style="left:102px;top:600px;" width="31" height="20" viewBox="0 0 31 20"><circle cx="15.50" cy="15.5" r="2.30" fill="#7c7c7c"/></svg>
<div class="a t" style="left:102px;top:625px;font-size:12.5px;color:#a0a0a0;width:31px;text-align:center;transform:scaleX(0.72);transform-origin:15.5px 0;">6</div>
<div class="a" style="left:134px;top:600px;width:31px;height:39px;background:#3f3f3f;"></div>
<svg class="a" style="left:134px;top:600px;" width="31" height="20" viewBox="0 0 31 20"><circle cx="15.50" cy="15.5" r="2.70" fill="#7c7c7c"/></svg>
<div class="a t" style="left:134px;top:625px;font-size:12.5px;color:#a0a0a0;width:31px;text-align:center;transform:scaleX(0.72);transform-origin:15.5px 0;">7</div>
<div class="a" style="left:166px;top:600px;width:32px;height:39px;background:#3f3f3f;"></div>
<svg class="a" style="left:166px;top:600px;" width="32" height="20" viewBox="0 0 32 20"><circle cx="16.00" cy="15.5" r="3.30" fill="#7c7c7c"/></svg>
<div class="a t" style="left:166px;top:625px;font-size:12.5px;color:#a0a0a0;width:32px;text-align:center;transform:scaleX(0.72);transform-origin:16.0px 0;">8</div>
<div class="a" style="left:199px;top:600px;width:31px;height:39px;background:#3f3f3f;"></div>
<svg class="a" style="left:199px;top:600px;" width="31" height="20" viewBox="0 0 31 20"><circle cx="15.50" cy="15.5" r="4.10" fill="#7c7c7c"/></svg>
<div class="a t" style="left:199px;top:625px;font-size:12.5px;color:#a0a0a0;width:31px;text-align:center;transform:scaleX(0.72);transform-origin:15.5px 0;">10</div>
<div class="a" style="left:37px;top:640px;width:31px;height:26px;background:#3f3f3f;"></div>
<svg class="a" style="left:37px;top:640px;" width="31" height="26" viewBox="0 0 31 26"><circle cx="15.50" cy="15.5" r="5.60" fill="#7c7c7c"/></svg>
<div class="a" style="left:69px;top:640px;width:32px;height:26px;background:#3f3f3f;"></div>
<svg class="a" style="left:69px;top:640px;" width="32" height="26" viewBox="0 0 32 26"><circle cx="16.00" cy="15.5" r="7.00" fill="#7c7c7c"/></svg>
<div class="a" style="left:102px;top:640px;width:31px;height:26px;background:#3f3f3f;"></div>
<svg class="a" style="left:102px;top:640px;" width="31" height="26" viewBox="0 0 31 26"><circle cx="15.50" cy="15.5" r="8.00" fill="#7c7c7c"/></svg>
<div class="a" style="left:134px;top:640px;width:31px;height:26px;background:#3f3f3f;"></div>
<svg class="a" style="left:134px;top:640px;" width="31" height="26" viewBox="0 0 31 26"><circle cx="15.50" cy="15.5" r="9.60" fill="#7c7c7c"/></svg>
<div class="a" style="left:166px;top:640px;width:32px;height:26px;background:#3f3f3f;"></div>
<svg class="a" style="left:166px;top:640px;" width="32" height="26" viewBox="0 0 32 26"><circle cx="16.00" cy="15.5" r="12.00" fill="#7c7c7c"/></svg>
<div class="a" style="left:199px;top:640px;width:31px;height:26px;background:#3f3f3f;"></div>
<svg class="a" style="left:199px;top:640px;" width="31" height="26" viewBox="0 0 31 26"><circle cx="15.50" cy="15.5" r="12.00" fill="#7c7c7c"/></svg>
<div class="a" style="left:36px;top:665px;width:208px;height:2px;background:#3f3f3f;"></div>
<div class="a" style="left:231px;top:560px;width:12px;height:107px;background:#3f3f3f;"></div>
<svg class="a" style="left:231px;top:560px;" width="12" height="12" viewBox="0 0 12 12"><rect x="0" y="0" width="12" height="12" rx="2" fill="#4c4c4c"/><path d="M3 7l3-3 3 3" fill="none" stroke="#c8c8c8" stroke-width="1.1"/></svg>
<div class="a" style="left:232px;top:573px;width:10px;height:36px;background:#4c4c4c;border-radius:5px;"></div>
<svg class="a" style="left:231px;top:654px;" width="12" height="12" viewBox="0 0 12 12"><rect x="0" y="0" width="12" height="12" rx="2" fill="#4c4c4c"/><path d="M3 4l3 3 3-3" fill="none" stroke="#c8c8c8" stroke-width="1.1"/></svg>
<div class="a" style="left:36px;top:667px;width:208px;height:4px;background:#333333;"></div>
<div class="a" style="left:36px;top:671px;width:208px;height:15px;background:#3a3a3a;"></div>
<svg class="a" style="left:42px;top:677px;" width="9" height="8" viewBox="0 0 9 8"><path d="M0 0.5h8M0 3.5h8M0 6.5h8" stroke="#8a8a8a" stroke-width="1"/></svg>
<div class="a" style="left:55px;top:672px;width:29px;height:14px;background:#474747;"></div>
<div class="a" style="left:85px;top:672px;width:38px;height:14px;background:#4f4f4f;"></div>
<div class="a" style="left:124px;top:672px;width:29px;height:14px;background:#474747;"></div>
<div class="a" style="left:154px;top:672px;width:29px;height:14px;background:#474747;"></div>
<div class="a" style="left:184px;top:672px;width:29px;height:14px;background:#474747;"></div>
<div class="a" style="left:214px;top:672px;width:29px;height:14px;background:#474747;"></div>
<svg class="a" style="left:55px;top:672px;" width="190" height="16" viewBox="0 0 190 16"><defs><linearGradient id="cg6" x1="0" x2="1" y1="0" y2="1"><stop offset="0" stop-color="#4a4a4a"/><stop offset="1" stop-color="#aaa"/></linearGradient></defs><g fill="none" stroke="#8a8a8a" stroke-width="1.2"><rect x="7.5" y="3.5" width="14" height="12" rx="2"/></g><g fill="#777"><rect x="9" y="5" width="3" height="3"/><rect x="15" y="8" width="5" height="5"/><rect x="9" y="11" width="3" height="3"/></g><rect x="17" y="10" width="1.5" height="1.5" fill="#444"/><rect x="37.5" y="2" width="14" height="14" rx="2" fill="none" stroke="#c0c0c0" stroke-width="1.3"/><path d="M40.5 2v14M48.5 2v14M37.5 5h3M37.5 8h3M37.5 11h3M48.5 5h3M48.5 8h3M48.5 11h3M40.5 9h8" stroke="#c0c0c0" stroke-width="1"/><rect x="41.5" y="3.5" width="6" height="4.5" fill="#999"/><rect x="41.5" y="10" width="6" height="4.5" fill="#999"/><path d="M77.5 16a7 7 0 0 1 14 0" fill="none" stroke="#8a8a8a" stroke-width="1.3"/><rect x="81" y="9.5" width="7" height="7" rx="1.5" fill="#8a8a8a"/><g fill="none" stroke="#8a8a8a" stroke-width="1.1"><path d="M107 5.5h5l1.5-2 1.5 2h6"/><path d="M107 12.5h5l1.5-2 1.5 2h6"/></g><path d="M112 5.5l1.5-2 1.5 2zM112 12.5l1.5-2 1.5 2z" fill="#8a8a8a"/><g fill="none" stroke="#8a8a8a" stroke-width="1.1"><path d="M137.5 4.5h5v3l-2.5 2.5-2.5-2.5zM146.5 4.5h5v3l-2.5 2.5-2.5-2.5zM140 10v5M149 10v5M138 15h4M147 15h4M142.5 6h4"/></g><path d="M169.5 15.5v-8a3 3 0 0 1 3-3h8a3 3 0 0 1 3 3v8z" fill="url(#cg6)" stroke="#9a9a9a" stroke-width="1.1"/><path d="M167.5 12v-6a3 3 0 0 1 3-3h9" fill="none" stroke="#8a8a8a"/></svg></svg>
<div class="a t" style="left:112px;top:676px;font-size:9px;color:#b0b0b0;">カ</div>
<div class="a" style="left:36px;top:686px;width:208px;height:6px;background:#474747;"></div>
<div class="a" style="left:36px;top:692px;width:208px;height:193px;background:#404040;"></div>
<div class="a" style="left:230px;top:692px;width:14px;height:193px;background:#3a3a3a;"></div>
<svg class="a" style="left:37px;top:692px;" width="194" height="158" viewBox="0 0 194 158"><rect x="0" y="0" width="12" height="12" fill="#000000"/><rect x="12" y="0" width="12" height="12" fill="#ff1a00"/><rect x="24" y="0" width="12" height="12" fill="#0000ff"/><rect x="36" y="0" width="12" height="12" fill="#fff"/><rect x="37" y="1" width="5" height="5" fill="#888"/><rect x="42" y="6" width="5" height="5" fill="#888"/><rect x="48" y="0" width="12" height="12" fill="#ffffff"/><rect x="60" y="0" width="12" height="12" fill="#1a9a40"/><rect x="72" y="0" width="12" height="12" fill="#ff0000"/><rect x="84" y="0" width="12" height="12" fill="#a9a39b"/><rect x="96" y="0" width="12" height="12" fill="#4a4c57"/><rect x="108" y="0" width="12" height="12" fill="#3f4149"/><rect x="120" y="0" width="12" height="12" fill="#3c3e44"/><rect x="132" y="0" width="12" height="12" fill="#f2c4c8"/><rect x="144" y="0" width="12" height="12" fill="#4a3c38"/><rect x="156" y="0" width="12" height="12" fill="#3e4878"/><rect x="168" y="0" width="12" height="12" fill="#ffdcc4"/><rect x="180" y="0" width="12" height="12" fill="#3f8a68"/><rect x="0" y="12" width="12" height="12" fill="#8a4a34"/><rect x="12" y="12" width="12" height="12" fill="#544a48"/><rect x="24" y="12" width="12" height="12" fill="#b8a070"/><rect x="36" y="12" width="12" height="12" fill="#ffe8d8"/><rect x="48" y="12" width="12" height="12" fill="#ffe4dc"/><rect x="60" y="12" width="12" height="12" fill="#f0b8c8"/><rect x="72" y="12" width="12" height="12" fill="#8aa858"/><rect x="84" y="12" width="12" height="12" fill="#101830"/><rect x="96" y="12" width="12" height="12" fill="#182850"/><rect x="108" y="12" width="12" height="12" fill="#707070"/><rect x="120" y="12" width="12" height="12" fill="#ff90f0"/><rect x="132" y="12" width="12" height="12" fill="#ffc890"/><rect x="144" y="12" width="12" height="12" fill="#ffe090"/><rect x="156" y="12" width="12" height="12" fill="#080810"/><rect x="168" y="12" width="12" height="12" fill="#101030"/><rect x="180" y="12" width="12" height="12" fill="#383858"/><rect x="0" y="24" width="12" height="12" fill="#404040"/><rect x="12" y="24" width="12" height="12" fill="#a85050"/><rect x="24" y="24" width="12" height="12" fill="#a87850"/><rect x="36" y="24" width="12" height="12" fill="#585858"/><rect x="48" y="24" width="12" height="12" fill="#a8a8a8"/><rect x="60" y="24" width="12" height="12" fill="#705888"/><rect x="72" y="24" width="12" height="12" fill="#909090"/><rect x="84" y="24" width="12" height="12" fill="#383838"/><rect x="96" y="24" width="12" height="12" fill="#e86840"/><rect x="108" y="24" width="12" height="12" fill="#a0a0a0"/><rect x="120" y="24" width="12" height="12" fill="#f098a0"/><rect x="132" y="24" width="12" height="12" fill="#a858a8"/><rect x="144" y="24" width="12" height="12" fill="#806898"/><rect x="156" y="24" width="12" height="12" fill="#8868a8"/><rect x="168" y="24" width="12" height="12" fill="#e8d080"/><rect x="180" y="24" width="12" height="12" fill="#202060"/><rect x="0" y="36" width="12" height="12" fill="#901820"/><rect x="12" y="36" width="12" height="12" fill="#303030"/><rect x="24" y="36" width="12" height="12" fill="#b0d098"/><rect x="36" y="36" width="12" height="12" fill="#d8b898"/><rect x="48" y="36" width="12" height="12" fill="#604080"/><rect x="60" y="36" width="12" height="12" fill="#202020"/><rect x="72" y="36" width="12" height="12" fill="#686868"/><rect x="84" y="36" width="12" height="12" fill="#88b8a8"/><rect x="96" y="36" width="12" height="12" fill="#a88858"/><rect x="108" y="36" width="12" height="12" fill="#a88858"/><rect x="120" y="36" width="12" height="12" fill="#989090"/><rect x="132" y="36" width="12" height="12" fill="#a8a8a8"/><rect x="144" y="36" width="12" height="12" fill="#f0c0b8"/><rect x="156" y="36" width="12" height="12" fill="#d8a8a0"/><rect x="168" y="36" width="12" height="12" fill="#1818e0"/><rect x="180" y="36" width="12" height="12" fill="#ffe8e0"/><rect x="0" y="48" width="12" height="12" fill="#c89090"/><rect x="12" y="48" width="12" height="12" fill="#b89868"/><rect x="24" y="48" width="12" height="12" fill="#ff00ff"/><rect x="36" y="48" width="12" height="12" fill="#a88858"/><rect x="48" y="48" width="12" height="12" fill="#78b8e8"/><rect x="60" y="48" width="12" height="12" fill="#ff5800"/><rect x="72" y="48" width="12" height="12" fill="#0000ff"/><rect x="84" y="48" width="12" height="12" fill="#0000e0"/><rect x="96" y="48" width="12" height="12" fill="#e07000"/><rect x="108" y="48" width="12" height="12" fill="#387858"/><rect x="120" y="48" width="12" height="12" fill="#b84060"/><rect x="132" y="48" width="12" height="12" fill="#e8b0c0"/><rect x="144" y="48" width="12" height="12" fill="#d090a0"/><rect x="156" y="48" width="12" height="12" fill="#58a898"/><rect x="168" y="48" width="12" height="12" fill="#48a888"/><rect x="180" y="48" width="12" height="12" fill="#40a0b0"/><rect x="0" y="60" width="12" height="12" fill="#4898c0"/><rect x="12" y="60" width="12" height="12" fill="#e07898"/><rect x="24" y="60" width="12" height="12" fill="#98a878"/><rect x="36" y="60" width="12" height="12" fill="#383838"/><rect x="48" y="60" width="12" height="12" fill="#282828"/><rect x="60" y="60" width="12" height="12" fill="#505050"/><rect x="72" y="60" width="12" height="12" fill="#d0d8b0"/><rect x="84" y="60" width="12" height="12" fill="#c8e090"/><rect x="96" y="60" width="12" height="12" fill="#a07858"/><rect x="108" y="60" width="12" height="12" fill="#a07858"/><rect x="120" y="60" width="12" height="12" fill="#d8b080"/><rect x="132" y="60" width="12" height="12" fill="#c8d8d0"/><rect x="144" y="60" width="12" height="12" fill="#c8d8d0"/><rect x="156" y="60" width="12" height="12" fill="#88b098"/><rect x="168" y="60" width="12" height="12" fill="#ffd8d0"/><rect x="180" y="60" width="12" height="12" fill="#585050"/><rect x="0" y="72" width="12" height="12" fill="#386850"/><rect x="12" y="72" width="12" height="12" fill="#e0d888"/><rect x="24" y="72" width="12" height="12" fill="#906838"/><rect x="36" y="72" width="12" height="12" fill="#a8b880"/><rect x="48" y="72" width="12" height="12" fill="#f0b050"/><rect x="60" y="72" width="12" height="12" fill="#f09050"/><rect x="72" y="72" width="12" height="12" fill="#f0b080"/><rect x="84" y="72" width="12" height="12" fill="#4858d8"/><rect x="96" y="72" width="12" height="12" fill="#986838"/><rect x="108" y="72" width="12" height="12" fill="#a88050"/><rect x="120" y="72" width="12" height="12" fill="#885830"/><rect x="132" y="72" width="12" height="12" fill="#181818"/><rect x="144" y="72" width="12" height="12" fill="#585858"/><rect x="156" y="72" width="12" height="12" fill="#505050"/><rect x="168" y="72" width="12" height="12" fill="#fff0c8"/><rect x="180" y="72" width="12" height="12" fill="#e0c890"/><rect x="0" y="84" width="12" height="12" fill="#384048"/><rect x="12" y="84" width="12" height="12" fill="#483838"/><rect x="24" y="84" width="12" height="12" fill="#686868"/><rect x="36" y="84" width="12" height="12" fill="#8098a8"/><rect x="48" y="84" width="12" height="12" fill="#a88048"/><rect x="60" y="84" width="12" height="12" fill="#d0dce8"/><rect x="72" y="84" width="12" height="12" fill="#ffd800"/><rect x="84" y="84" width="12" height="12" fill="#787878"/><rect x="96" y="84" width="12" height="12" fill="#ff0000"/><rect x="108" y="84" width="12" height="12" fill="#b06820"/><rect x="120" y="84" width="12" height="12" fill="#a01818"/><rect x="132" y="84" width="12" height="12" fill="#705838"/><rect x="144" y="84" width="12" height="12" fill="#e01020"/><rect x="156" y="84" width="12" height="12" fill="#2020c0"/><rect x="168" y="84" width="12" height="12" fill="#584838"/><rect x="180" y="84" width="12" height="12" fill="#c89048"/><rect x="0" y="96" width="12" height="12" fill="#101030"/><rect x="12" y="96" width="12" height="12" fill="#e02818"/><rect x="24" y="96" width="12" height="12" fill="#383838"/><rect x="36" y="96" width="12" height="12" fill="#60a0d8"/><rect x="48" y="96" width="12" height="12" fill="#3078b8"/><rect x="60" y="96" width="12" height="12" fill="#888888"/><rect x="72" y="96" width="12" height="12" fill="#fff8e0"/><rect x="84" y="96" width="12" height="12" fill="#d0d0d0"/><rect x="96" y="96" width="12" height="12" fill="#687898"/><rect x="108" y="96" width="12" height="12" fill="#a83828"/><rect x="120" y="96" width="12" height="12" fill="#604030"/><rect x="132" y="96" width="12" height="12" fill="#604030"/><rect x="144" y="96" width="12" height="12" fill="#604030"/><rect x="156" y="96" width="12" height="12" fill="#b03020"/><rect x="168" y="96" width="12" height="12" fill="#c03028"/><rect x="180" y="96" width="12" height="12" fill="#604838"/><rect x="0" y="108" width="12" height="12" fill="#c84030"/><rect x="12" y="108" width="12" height="12" fill="#483828"/><rect x="24" y="108" width="12" height="12" fill="#606068"/><rect x="36" y="108" width="12" height="12" fill="#b8c0c8"/><rect x="48" y="108" width="12" height="12" fill="#302018"/><rect x="60" y="108" width="12" height="12" fill="#ffc8b0"/><rect x="72" y="108" width="12" height="12" fill="#f0b0a0"/><rect x="84" y="108" width="12" height="12" fill="#e8e4d8"/><rect x="96" y="108" width="12" height="12" fill="#b8a880"/><rect x="108" y="108" width="12" height="12" fill="#f0f0f0"/><rect x="120" y="108" width="12" height="12" fill="#e8e8e8"/><rect x="132" y="108" width="12" height="12" fill="#e0e0e0"/><rect x="144" y="108" width="12" height="12" fill="#e8f4f8"/><rect x="156" y="108" width="12" height="12" fill="#e0eef4"/><rect x="168" y="108" width="12" height="12" fill="#a0c8d8"/><rect x="180" y="108" width="12" height="12" fill="#3848b0"/><rect x="0" y="120" width="12" height="12" fill="#383c44"/><rect x="12" y="120" width="12" height="12" fill="#c8c8c8"/><rect x="24" y="120" width="12" height="12" fill="#0000ff"/><rect x="36" y="120" width="12" height="12" fill="#f8fff0"/><rect x="48" y="120" width="12" height="12" fill="#d8e4f0"/><rect x="60" y="120" width="12" height="12" fill="#dce8f4"/><rect x="72" y="120" width="12" height="12" fill="#e0ecf8"/><rect x="84" y="120" width="12" height="12" fill="#e0ecf8"/><rect x="96" y="120" width="12" height="12" fill="#e4f0fc"/><rect x="108" y="120" width="12" height="12" fill="#c8d8e8"/><rect x="120" y="120" width="12" height="12" fill="#d0dcec"/><rect x="132" y="120" width="12" height="12" fill="#c8d8e8"/><rect x="144" y="120" width="12" height="12" fill="#dce8f4"/><rect x="156" y="120" width="12" height="12" fill="#e0e8f0"/><rect x="168" y="120" width="12" height="12" fill="#e8eef4"/><rect x="180" y="120" width="12" height="12" fill="#eef4fc"/><rect x="0" y="132" width="12" height="12" fill="#f0f4ff"/><rect x="12" y="132" width="12" height="12" fill="#c0d0e0"/><rect x="24" y="132" width="12" height="12" fill="#e85050"/><rect x="36" y="132" width="12" height="12" fill="#f4f8ff"/><rect x="48" y="132" width="12" height="12" fill="#f0f0ff"/><rect x="60" y="132" width="12" height="12" fill="#e0d8f8"/><rect x="72" y="132" width="12" height="12" fill="#e8ffff"/><rect x="84" y="132" width="12" height="12" fill="#ece8fc"/><rect x="96" y="132" width="12" height="12" fill="#f0ecfc"/><rect x="108" y="132" width="12" height="12" fill="#f0e8fc"/><rect x="120" y="132" width="12" height="12" fill="#f4e8fc"/><rect x="132" y="132" width="12" height="12" fill="#e0d8f0"/><rect x="144" y="132" width="12" height="12" fill="#d0e0f0"/><rect x="156" y="132" width="12" height="12" fill="#90b8c8"/><rect x="168" y="132" width="12" height="12" fill="#98c0d0"/><rect x="180" y="132" width="12" height="12" fill="#a8d8e8"/><rect x="0" y="144" width="12" height="12" fill="#c8ecf8"/><rect x="12" y="144" width="12" height="12" fill="#f07820"/><rect x="24" y="144" width="12" height="12" fill="#d820c0"/><rect x="36" y="144" width="12" height="12" fill="#20c040"/><rect x="48" y="144" width="12" height="12" fill="#1828d0"/><rect x="60" y="144" width="12" height="12" fill="#68a8b8"/><rect x="72" y="144" width="12" height="12" fill="#303438"/><rect x="84" y="144" width="12" height="12" fill="#303440"/><path d="M0.5 0V156" stroke="#808080"/><path d="M12.5 0V156" stroke="#808080"/><path d="M24.5 0V156" stroke="#808080"/><path d="M36.5 0V156" stroke="#808080"/><path d="M48.5 0V156" stroke="#808080"/><path d="M60.5 0V156" stroke="#808080"/><path d="M72.5 0V156" stroke="#808080"/><path d="M84.5 0V156" stroke="#808080"/><path d="M96.5 0V156" stroke="#808080"/><path d="M108.5 0V156" stroke="#808080"/><path d="M120.5 0V156" stroke="#808080"/><path d="M132.5 0V156" stroke="#808080"/><path d="M144.5 0V156" stroke="#808080"/><path d="M156.5 0V156" stroke="#808080"/><path d="M168.5 0V156" stroke="#808080"/><path d="M180.5 0V156" stroke="#808080"/><path d="M192.5 0V156" stroke="#808080"/><path d="M0 0.5H192.5" stroke="#808080"/><path d="M0 12.5H192.5" stroke="#808080"/><path d="M0 24.5H192.5" stroke="#808080"/><path d="M0 36.5H192.5" stroke="#808080"/><path d="M0 48.5H192.5" stroke="#808080"/><path d="M0 60.5H192.5" stroke="#808080"/><path d="M0 72.5H192.5" stroke="#808080"/><path d="M0 84.5H192.5" stroke="#808080"/><path d="M0 96.5H192.5" stroke="#808080"/><path d="M0 108.5H192.5" stroke="#808080"/><path d="M0 120.5H192.5" stroke="#808080"/><path d="M0 132.5H192.5" stroke="#808080"/><path d="M0 144.5H192.5" stroke="#808080"/><path d="M0 156.5H192.5" stroke="#808080"/><rect x="97" y="145" width="96" height="13" fill="#4a4a4a"/><rect x="0" y="0" width="12.5" height="12.5" rx="1" fill="#ff1010"/><rect x="1.5" y="1.5" width="9.5" height="9.5" fill="#fff"/><rect x="3" y="3" width="6.5" height="6.5" fill="#000" stroke="#777" stroke-width="0.5"/></svg>
<div class="a" style="left:36px;top:885px;width:208px;height:11px;background:#454545;"></div>
<div class="a" style="left:37px;top:887px;width:7px;height:7px;background:#c00000;border:1px solid #222;"></div>
<div class="a" style="left:69px;top:887px;width:8px;height:7px;background:#10c010;border:1px solid #222;"></div>
<div class="a" style="left:100px;top:887px;width:8px;height:7px;background:#1010e0;border:1px solid #222;"></div>
<div class="a" style="left:245px;top:72px;width:916px;height:23px;background:#383838;"></div>
<div class="a" style="left:245px;top:72px;width:916px;height:2px;background:#333333;"></div>
<div class="a" style="left:245px;top:74px;width:100px;height:20px;background:#687490;"></div>
<div class="a" style="left:245px;top:95px;width:904px;height:749px;background:#2d2d2d;"></div>
<div class="a" style="left:293px;top:95px;width:590px;height:749px;background:#ffffff;"></div>
<div class="a" style="left:1149px;top:95px;width:12px;height:749px;background:#444444;"></div>
<div class="a" style="left:245px;top:844px;width:916px;height:12px;background:#3f3f3f;"></div>
<div class="a" style="left:245px;top:856px;width:916px;height:40px;background:#3a3a3a;"></div>
<div class="a" style="left:0px;top:896px;width:1434px;height:3px;background:#1e1e1e;"></div>
<div id="m27" class="a t" style="left:250px;top:78px;font-size:11px;color:#d0d4dc;transform:scaleX(0.714);transform-origin:0 0;">クリスタマーク*</div>
<div class="a" style="left:331px;top:81px;width:6px;height:6px;border-radius:3px;background:#c0c0c0"></div>
<svg class="a" style="left:1148px;top:76px;" width="14" height="14" viewBox="0 0 14 14"><path d="M4 5.3l3 3 3-3" fill="none" stroke="#c8c8c8" stroke-width="1.2"/></svg>
<svg class="a" style="left:293px;top:95px;" width="590" height="749" viewBox="0 0 590 749"><defs><filter id="grain" x="100" y="200" width="300" height="300" filterUnits="userSpaceOnUse"><feTurbulence type="fractalNoise" baseFrequency="0.9" numOctaves="1" seed="4" result="t"/><feColorMatrix in="t" type="matrix" values="0.33 0.33 0.33 0 0 0.33 0.33 0.33 0 0 0.33 0.33 0.33 0 0 0 0 0 0 1" result="g"/><feComposite in="SourceGraphic" in2="g" operator="arithmetic" k1="0" k2="1" k3="0.65" k4="-0.33" result="c"/><feComposite in="c" in2="SourceAlpha" operator="in"/></filter></defs><path d="M275 316.5L192.5 340.6A33 33 0 0 1 174.8 277L267.3 253.5A63.5 63.5 0 0 1 301.2 375.8L225 399L241 437" fill="none" stroke="#8c8c8c" stroke-width="37.5" stroke-linecap="round" stroke-linejoin="round" filter="url(#grain)"/></svg>
<svg class="a" style="left:1149px;top:95px;" width="12" height="14" viewBox="0 0 12 14"><rect x="0.5" y="0.5" width="11" height="12" rx="2" fill="#5a5a5a"/><path d="M3 8l3-3 3 3" fill="none" stroke="#d0d0d0" stroke-width="1.1"/></svg>
<svg class="a" style="left:1149px;top:831px;" width="12" height="13" viewBox="0 0 12 13"><rect x="0.5" y="0.5" width="11" height="12" rx="2" fill="#5a5a5a"/><path d="M3 5l3 3 3-3" fill="none" stroke="#d0d0d0" stroke-width="1.1"/></svg>
<div class="a" style="left:1151px;top:316px;width:9px;height:265px;background:#525252;border-radius:4px;"></div>
<div class="a" style="left:245px;top:844px;width:904px;height:12px;background:#3c3c3c;"></div>
<div class="a" style="left:759px;top:845px;width:258px;height:11px;background:#5a5a5a;border-radius:5px;"></div>
<svg class="a" style="left:1137px;top:844px;" width="12" height="12" viewBox="0 0 12 12"><rect x="0.5" y="0.5" width="11" height="11" rx="2" fill="#5a5a5a"/><path d="M5 3l3 3-3 3" fill="none" stroke="#d0d0d0" stroke-width="1.1"/></svg>
<div class="a" style="left:1149px;top:844px;width:12px;height:12px;background:#444444;"></div>
<svg class="a" style="left:246px;top:844px;" width="330" height="12" viewBox="0 0 330 12"><rect x="0.5" y="0.5" width="97" height="11" fill="#2e2e2e" stroke="#5a5a5a"/><path d="M1 1H97V2L1 11z" fill="#4c4c4c"/><rect x="41" y="0.5" width="3" height="11" fill="#5e5e5e" stroke="#666" stroke-width="0.5"/><path d="M107 6h7M128 6h7M131.5 2.5v7" stroke="#8a8a8a" stroke-width="1.4"/><rect x="147" y="3" width="6" height="6" fill="#9a9a9a"/><rect x="161.5" y="0.5" width="97" height="11" fill="#4a4a4a" stroke="#5a5a5a"/><path d="M199 11L209 8V11z" fill="#2e2e2e"/><path d="M212 11L230 1H240L258 11z" fill="#2e2e2e"/><rect x="209" y="0.5" width="3" height="11" fill="#5e5e5e" stroke="#666" stroke-width="0.5"/></svg>
<div id="m28" class="a t" style="left:324px;top:844px;font-size:12.5px;color:#e8e8e8;transform:scaleX(0.780);transform-origin:0 0;">25.0</div>
<div id="m29" class="a t" style="left:414px;top:844px;font-size:12.5px;color:#e8e8e8;transform:scaleX(0.748);transform-origin:0 0;">0.0</div>
<svg class="a" style="left:508px;top:844px;" width="75" height="12" viewBox="0 0 75 12"><g fill="none" stroke="#aaa" stroke-width="1.2"><path d="M5 6a3.8 3.8 0 0 1 7.5 0.5v3"/><path d="M32 6a3.8 3.8 0 0 0-7.5 0.5v3"/><circle cx="48" cy="6.3" r="4.3"/></g><path d="M2.5 5.5h5l-2.5 3z" fill="#aaa"/><path d="M34.5 5.5h-5l2.5 3z" fill="#aaa"/><path d="M48 2v4.3" stroke="#aaa" stroke-width="1.2"/><circle cx="48" cy="6.3" r="1.5" fill="#aaa"/><rect x="59" y="0" width="11" height="12" rx="2" fill="#4e4e4e"/><path d="M66 3l-3 3 3 3" fill="none" stroke="#ccc" stroke-width="1.1"/></svg>
<svg class="a" style="left:249px;top:858px;" width="16" height="36" viewBox="0 0 16 36"><path d="M3 9l4-4 4 4" fill="none" stroke="#999" stroke-width="1.1"/><path d="M3 24l4 4 4-4M3 28l4 4 4-4" fill="none" stroke="#999" stroke-width="1.1"/></svg>
<div class="a" style="left:269px;top:861px;width:38px;height:33px;background:#4a4a4a;"></div>
<svg class="a" style="left:279px;top:868px;" width="18" height="18" viewBox="0 0 18 18"><rect x="1.5" y="1.5" width="15" height="15" rx="1.5" fill="none" stroke="#c8c8c8" stroke-width="1.2"/><path d="M5 2v14M13 2v14" stroke="#c8c8c8"/><path d="M7.5 6l1.5-1.5 1.5 1.5M7.5 12l1.5 1.5 1.5-1.5" fill="none" stroke="#c8c8c8"/></svg>
<div class="a" style="left:1161px;top:68px;width:16px;height:828px;background:#3a3a3a;"></div>
<div class="a" style="left:1176px;top:68px;width:1px;height:828px;background:#2b2b2b;"></div>
<div class="a" style="left:1177px;top:68px;width:257px;height:828px;background:#3f3f3f;"></div>
<div class="a" style="left:1177px;top:68px;width:257px;height:17px;background:#3a3a3a;"></div>
<svg class="a" style="left:1182px;top:74px;" width="9" height="8" viewBox="0 0 9 8"><path d="M0 0.5h8M0 3.5h8M0 6.5h8" stroke="#8a8a8a" stroke-width="1"/></svg>
<div class="a" style="left:1197px;top:70px;width:71px;height:15px;background:#4b4b4b;"></div>
<div class="a" style="left:1270px;top:71px;width:28px;height:14px;background:#474747;"></div>
<div class="a" style="left:1300px;top:71px;width:28px;height:14px;background:#474747;"></div>
<div class="a" style="left:1330px;top:71px;width:28px;height:14px;background:#474747;"></div>
<svg class="a" style="left:1197px;top:70px;" width="170" height="16" viewBox="0 0 170 16"><g fill="none" stroke="#b8b8b8" stroke-width="1.2"><rect x="8.5" y="3.5" width="10" height="8"/><path d="M6.5 5.5v8h10"/></g><g fill="none" stroke="#777" stroke-width="1.2"><rect x="81.5" y="3.5" width="10" height="10"/><path d="M108 14a6 6 0 0 1 12 0M114 4a3.5 3.5 0 1 0 0.1 0"/><circle cx="149" cy="10" r="6"/><path d="M149 8v5"/></g></svg>
<div id="m30" class="a t" style="left:1224px;top:75px;font-size:10.5px;color:#b4b4b4;transform:scaleX(0.621);transform-origin:0 0;">ナビゲーター</div>
<div class="a" style="left:1177px;top:85px;width:257px;height:5px;background:#474747;"></div>
<div class="a" style="left:1177px;top:90px;width:257px;height:187px;background:#2d2d2d;"></div>
<div class="a" style="left:1244px;top:91px;width:125px;height:186px;background:#ffffff;"></div>
<div class="a" style="left:1234px;top:92px;width:192px;height:160px;border:2px solid #e00a0a;"></div>
<svg class="a" style="left:1244px;top:91px;" width="125" height="186" viewBox="0 0 125 186"><g transform="scale(0.212)"><path d="M275 316.5L192.5 340.6A33 33 0 0 1 174.8 277L267.3 253.5A63.5 63.5 0 0 1 301.2 375.8L225 399L241 437" fill="none" stroke="#8a8a8a" stroke-width="37" stroke-linecap="round" stroke-linejoin="round"/></g></svg>
<div class="a" style="left:1177px;top:277px;width:257px;height:43px;background:#4a4a4a;"></div>
<svg class="a" style="left:1182px;top:280px;" width="104" height="42" viewBox="0 0 104 42"><rect x="0.5" y="4.5" width="102" height="11" fill="#3a3a3a" stroke="#5c5c5c"/><path d="M1 15.5L102 5V15.5z" fill="#2c2c2c"/><rect x="41" y="0" width="4" height="20" rx="1" fill="#7a7a7a"/><rect x="0.5" y="23.5" width="102" height="12" fill="#3a3a3a" stroke="#5c5c5c"/><path d="M1 25c12 6 20 10 30 10s20-10 30-10 25 5 41 10V35.5H1z" fill="#2c2c2c"/><rect x="51" y="20" width="4" height="21" rx="1" fill="#7a7a7a"/></svg>
<div id="m31" class="a t" style="left:1311px;top:284px;font-size:12.5px;color:#e8e8e8;transform:scaleX(0.780);transform-origin:0 0;">25.0</div>
<div id="m32" class="a t" style="left:1318px;top:304px;font-size:12.5px;color:#e8e8e8;transform:scaleX(0.690);transform-origin:0 0;">0.0</div>
<svg class="a" style="left:1332px;top:280px;" width="102" height="42" viewBox="0 0 102 42"><g fill="none" stroke="#bdbdbd" stroke-width="1.1"><circle cx="9.5" cy="10.5" r="7"/><path d="M5.5 10.5h8"/><circle cx="29.5" cy="10.5" r="7"/><path d="M25.5 10.5h8M29.5 6.5v8"/><circle cx="49.5" cy="10.5" r="7"/><path d="M62.5 4v16M62.5 24v16"/><rect x="68.5" y="3.5" width="8" height="8"/><rect x="72.5" y="8.5" width="8" height="8"/><rect x="87.5" y="3.5" width="13" height="13"/><path d="M90 6l8 8M90 6v3M90 6h3M98 14v-3M98 14h-3"/><path d="M4 30.5a6 6 0 1 0 4-5.5"/><path d="M35 30.5a6 6 0 1 1-4-5.5"/><circle cx="49.5" cy="30.5" r="6.5" stroke-dasharray="3 1.5"/><path d="M49.5 24v6.5"/></g><rect x="46" y="7" width="7" height="7" fill="#bdbdbd"/><path d="M2 30l3 3 2-4zM37 30l-3 3-2-4z" fill="#bdbdbd"/><circle cx="49.5" cy="30.5" r="1.5" fill="#bdbdbd"/><path d="M68 25v11l5-5.5z" fill="none" stroke="#bdbdbd" stroke-width="1.1"/><path d="M80 25v11l-5-5.5z" fill="#bdbdbd"/><path d="M87 32h14" stroke="#bdbdbd"/><path d="M88 24h12l-6 6z" fill="#bdbdbd"/><path d="M88.5 40.5h11l-5.5-6z" fill="none" stroke="#bdbdbd"/></svg>
<div class="a" style="left:1177px;top:320px;width:257px;height:4px;background:#333333;"></div>
<div class="a" style="left:1177px;top:324px;width:257px;height:15px;background:#3a3a3a;"></div>
<svg class="a" style="left:1182px;top:329px;" width="9" height="8" viewBox="0 0 9 8"><path d="M0 0.5h8M0 3.5h8M0 6.5h8" stroke="#8a8a8a" stroke-width="1"/></svg>
<div class="a" style="left:1196px;top:325px;width:89px;height:14px;background:#4b4b4b;"></div>
<svg class="a" style="left:1200px;top:325px;" width="20" height="16" viewBox="0 0 20 16"><circle cx="9" cy="8" r="5.5" fill="none" stroke="#b8b8b8" stroke-width="1.4"/><path d="M7 6l5 5M7 6v3M7 6h3" stroke="#b8b8b8" stroke-width="1.2"/></svg>
<div id="m33" class="a t" style="left:1224px;top:330px;font-size:10.5px;color:#b4b4b4;transform:scaleX(0.648);transform-origin:0 0;">クイックアクセス</div>
<div class="a" style="left:1177px;top:339px;width:257px;height:5px;background:#474747;"></div>
<div class="a" style="left:1177px;top:344px;width:257px;height:29px;background:#3f3f3f;"></div>
<div class="a" style="left:1177px;top:344px;width:257px;height:1px;background:#2e2e2e;"></div>
<div class="a" style="left:1178px;top:345px;width:148px;height:24px;background:#5f6a80;border:1px solid #222;border-radius:3px;"></div>
<div id="m34" class="a t" style="left:1180px;top:351px;font-size:12px;color:#e0e0e0;transform:scaleX(0.885);transform-origin:0 0;">MyOwn</div>
<div class="a" style="left:1177px;top:373px;width:257px;height:109px;background:#3f3f3f;"></div>
<div class="a" style="left:1178px;top:373px;width:244px;height:109px;background:#4f4f4f;"></div>
<svg class="a" style="left:1178px;top:373px;" width="244" height="30" viewBox="0 0 244 30"><g fill="#b8b8b8"><path d="M24.5 19.5l10.5-10.5a1.5 1.5 0 0 1 2.2 0l0.8 0.8a1.5 1.5 0 0 1 0 2.2L27.5 22.5z"/><path d="M23.8 20.2l3 3-4.5 1.5z"/><path d="M35.5 24.5l4.5-4.5v4.5z"/><path d="M21.5 23.5h13" stroke="#b8b8b8" stroke-width="1.1"/></g><g fill="#b8b8b8"><path d="M84 24V10.5a1.5 1.5 0 0 1 1.5-1.5h4l1 1.2" fill="none" stroke="#b8b8b8" stroke-width="1.3"/><path d="M88.5 12.5h7a1.5 1.5 0 0 1 1.5 1.5v1.5H88.5z" fill="none" stroke="#b8b8b8" stroke-width="1.3"/><path d="M91 9.5a2.2 2.2 0 0 1 4 0v3h-4z" fill="none" stroke="#b8b8b8" stroke-width="1.2"/><path d="M85.5 25l3-9.5h12l-3 9.5z"/><path d="M96 25l5-5v5z"/></g><path d="M144.5 8.5h17l-17 17z" fill="none" stroke="#b8b8b8" stroke-width="2.6" stroke-linejoin="round"/><g fill="none" stroke="#6c6c6c" stroke-width="1.3"><path d="M205 11.5l9-4.5 9 4.5-9 4.5z"/><path d="M205 15.5l9 4.5 9-4.5M205 19.5l9 4.5 9-4.5"/></g><path d="M218 25l5-5v5z" fill="#6c6c6c"/></svg>
<div class="a" style="left:1180px;top:403px;width:57px;height:14px;overflow:hidden;-webkit-mask-image:linear-gradient(to right,#000 82%,transparent)">
<div id="m35" class="a t" style="left:0px;top:0px;font-size:12px;color:#d8d8d8;transform:scaleX(0.714);transform-origin:0 0;">線の色を描画色</div>
</div>
<div class="a" style="left:1241px;top:403px;width:57px;height:14px;overflow:hidden;-webkit-mask-image:linear-gradient(to right,#000 82%,transparent)">
<div id="m36" class="a t" style="left:0px;top:0px;font-size:12px;color:#c8c8c8;transform:scaleX(0.635);transform-origin:0 0;">オーバーレイ作成</div>
</div>
<div id="m37" class="a t" style="left:1306px;top:403px;font-size:12.5px;color:#e8e8e8;transform:scaleX(0.904);transform-origin:0 0;">対称定規</div>
<div class="a" style="left:1364px;top:403px;width:55px;height:14px;overflow:hidden;-webkit-mask-image:linear-gradient(to right,#000 82%,transparent)">
<div id="m38" class="a t" style="left:0px;top:0px;font-size:12px;color:#7a7a7a;transform:scaleX(0.646);transform-origin:0 0;">選択中のレイヤー</div>
</div>
<div class="a" style="left:1177px;top:482px;width:257px;height:5px;background:#333333;"></div>
<div class="a" style="left:1177px;top:487px;width:257px;height:15px;background:#3a3a3a;"></div>
<svg class="a" style="left:1182px;top:492px;" width="9" height="8" viewBox="0 0 9 8"><path d="M0 0.5h8M0 3.5h8M0 6.5h8" stroke="#8a8a8a" stroke-width="1"/></svg>
<div class="a" style="left:1196px;top:488px;width:59px;height:14px;background:#4b4b4b;"></div>
<div class="a" style="left:1257px;top:489px;width:94px;height:13px;background:#434343;"></div>
<svg class="a" style="left:1198px;top:488px;" width="30" height="16" viewBox="0 0 30 16"><g fill="none" stroke="#b8b8b8" stroke-width="1.1"><path d="M3 6l6-3 6 3-6 3z"/><path d="M3 9l6 3 6-3M3 12l6 3 6-3"/></g></svg>
<div id="m39" class="a t" style="left:1224px;top:492px;font-size:10.5px;color:#b4b4b4;transform:scaleX(0.636);transform-origin:0 0;">レイヤー</div>
<svg class="a" style="left:1260px;top:489px;" width="24" height="14" viewBox="0 0 24 14"><g fill="none" stroke="#6a6a6a" stroke-width="1.1"><path d="M3 6l6-3 6 3-6 3z"/><path d="M3 10l6 3 6-3"/></g></svg>
<div id="m40" class="a t" style="left:1285px;top:492px;font-size:10.5px;color:#777;transform:scaleX(0.616);transform-origin:0 0;">レイヤープロパティ</div>
<div class="a" style="left:1177px;top:502px;width:257px;height:72px;background:#4a4a4a;"></div>
<div class="a" style="left:1178px;top:507px;width:39px;height:20px;background:#555;border:1px solid #606060;border-radius:3px;"></div>
<svg class="a" style="left:1178px;top:507px;" width="39" height="20" viewBox="0 0 39 20"><rect x="4.5" y="3.5" width="14" height="13" rx="2" fill="none" stroke="#c8c8c8" stroke-width="1.1"/><path d="M27 8l4 4 4-4" fill="none" stroke="#c8c8c8" stroke-width="1.1"/></svg>
<div class="a" style="left:1220px;top:507px;width:86px;height:20px;background:#555;border:1px solid #606060;border-radius:3px;"></div>
<div id="m41" class="a t" style="left:1245px;top:510px;font-size:13px;color:#e8e8e8;transform:scaleX(0.885);transform-origin:0 0;">通常</div>
<svg class="a" style="left:1290px;top:507px;" width="16" height="20" viewBox="0 0 16 20"><path d="M3 8l4.5 4.5 4.5-4.5" fill="none" stroke="#c8c8c8" stroke-width="1.1"/></svg>
<svg class="a" style="left:1312px;top:512px;" width="85" height="9" viewBox="0 0 85 9"><defs><linearGradient id="og" x1="0" x2="1"><stop offset="0" stop-color="#cfcfcf" stop-opacity="0.5"/><stop offset="1" stop-color="#d8d8d8"/></linearGradient></defs><rect x="0" y="0" width="85" height="9" fill="#b0b0b0"/><rect x="0" y="0.0" width="5" height="4.5" fill="#fff" opacity="0.90"/><rect x="5" y="4.5" width="5" height="4.5" fill="#fff" opacity="0.86"/><rect x="10" y="0.0" width="5" height="4.5" fill="#fff" opacity="0.83"/><rect x="15" y="4.5" width="5" height="4.5" fill="#fff" opacity="0.80"/><rect x="20" y="0.0" width="5" height="4.5" fill="#fff" opacity="0.76"/><rect x="25" y="4.5" width="5" height="4.5" fill="#fff" opacity="0.72"/><rect x="30" y="0.0" width="5" height="4.5" fill="#fff" opacity="0.69"/><rect x="35" y="4.5" width="5" height="4.5" fill="#fff" opacity="0.66"/><rect x="40" y="0.0" width="5" height="4.5" fill="#fff" opacity="0.62"/><rect x="45" y="4.5" width="5" height="4.5" fill="#fff" opacity="0.58"/><rect x="50" y="0.0" width="5" height="4.5" fill="#fff" opacity="0.55"/><rect x="55" y="4.5" width="5" height="4.5" fill="#fff" opacity="0.52"/><rect x="60" y="0.0" width="5" height="4.5" fill="#fff" opacity="0.48"/><rect x="65" y="4.5" width="5" height="4.5" fill="#fff" opacity="0.44"/><rect x="70" y="0.0" width="5" height="4.5" fill="#fff" opacity="0.41"/><rect x="75" y="4.5" width="5" height="4.5" fill="#fff" opacity="0.38"/><rect x="80" y="0.0" width="5" height="4.5" fill="#fff" opacity="0.34"/><rect x="0" y="0" width="85" height="9" fill="url(#og)" opacity="0.6"/></svg>
<div class="a" style="left:1396px;top:507px;width:3px;height:20px;background:#8a8a8a;"></div>
<div id="m42" class="a t" style="left:1404px;top:511px;font-size:12.5px;color:#e8e8e8;transform:scaleX(0.767);transform-origin:0 0;">100</div>
<svg class="a" style="left:1422px;top:507px;" width="12" height="20" viewBox="0 0 12 20"><path d="M2 6l4-4 4 4M2 14l4 4 4-4" fill="none" stroke="#c8c8c8" stroke-width="1.1"/></svg>
<div class="a" style="left:1325px;top:529px;width:36px;height:20px;background:#474747;border-radius:2px;"></div>
<div class="a" style="left:1362px;top:529px;width:36px;height:20px;background:#474747;border-radius:2px;"></div>
<div class="a" style="left:1399px;top:529px;width:35px;height:20px;background:#555;border:1px solid #606060;border-radius:3px;"></div>
<svg class="a" style="left:1225px;top:528px;" width="209" height="22" viewBox="0 0 209 22"><g fill="#9a9a9a"><rect x="4" y="6" width="9" height="9" rx="1" fill="none" stroke="#9a9a9a" stroke-dasharray="2 1"/><rect x="1" y="9" width="9" height="9" rx="1"/></g><g fill="none" stroke="#bbb" stroke-width="1.2"><path d="M30 5v14M25 8h10M27 5l3 2 3-2M28 19l2-8 2 8"/></g><path d="M44 5h4l1 3 2-3h2v8l-3 5-4 1z" fill="none" stroke="#bbb" stroke-width="1.2"/><path d="M66 10V8a4 4 0 0 1 8 0v2" fill="none" stroke="#bbb" stroke-width="1.4"/><rect x="64.5" y="10" width="11" height="9" rx="1" fill="#bbb"/><g fill="#666"><rect x="90" y="5" width="3" height="3"/><rect x="96" y="5" width="3" height="3"/><rect x="93" y="8" width="3" height="3"/><rect x="84" y="13" width="7" height="6"/></g><g fill="none" stroke="#666" stroke-width="1.3"><circle cx="109" cy="11" r="5"/><path d="M112 14l5 5M117 14l-5 5M124 9l3 3 3-3"/><path d="M140 6h10l-8 9v4"/><path d="M148 14l5 5M153 14l-5 5M161 9l3 3 3-3"/></g><rect x="179" y="4" width="10" height="10" fill="#3a8ae8"/><rect x="184" y="9" width="10" height="10" fill="#fff"/><rect x="184" y="9" width="5" height="5" fill="#3a8ae8"/><path d="M198 9l4 4 4-4" fill="none" stroke="#c8c8c8" stroke-width="1.1"/></svg>
<svg class="a" style="left:1177px;top:551px;" width="257" height="22" viewBox="0 0 257 22"><g fill="none" stroke="#c0c0c0" stroke-width="1.1"><rect x="3.5" y="4.5" width="13" height="13" rx="1.5"/><path d="M3.5 9h13M3.5 13h13"/><path d="M7 6.8h1M7 11h1M7 15.2h1"/></g><g fill="none" stroke="#bbb" stroke-width="1.1"><path d="M102.5 15.5v-11.5h10.5v7M102.5 15.5l2.5 2.5h4"/><path d="M122.5 15.5v-11.5h10.5v7M122.5 15.5l2.5 2.5h4"/><circle cx="127.5" cy="10" r="3.2"/><path d="M141.5 16.5v-12h5.5l1.5 2h6.5v5"/></g><path d="M102.5 15.5l2.5 2.5v-2.5zM122.5 15.5l2.5 2.5v-2.5z" fill="#bbb"/><g fill="#bbb"><circle cx="113" cy="16.5" r="3.6"/><circle cx="133" cy="16.5" r="3.6"/><circle cx="153" cy="16.5" r="3.6"/></g><g stroke="#4a4a4a" stroke-width="1.1"><path d="M113 14.3v4.4M110.8 16.5h4.4M133 14.3v4.4M130.8 16.5h4.4M153 14.3v4.4M150.8 16.5h4.4"/></g><g fill="none" stroke="#777" stroke-width="1.1"><path d="M167.5 7.5v-4h8v8h-4"/><rect x="160.5" y="9.5" width="8" height="8"/><path d="M187.5 7.5v-4h8v8h-4"/><rect x="180.5" y="9.5" width="8" height="8"/><path d="M222.5 6.5v11h14v-11z"/></g><rect x="166" y="5" width="6" height="5" fill="#777"/><path d="M184 15l4-4M184 12v3h3" fill="none" stroke="#777"/><rect x="200" y="3.5" width="15" height="14.5" rx="2.5" fill="#c8c8c8"/><circle cx="207.5" cy="10.8" r="4.6" fill="#3a3a3a"/><circle cx="231" cy="12" r="3" fill="#777"/><path d="M225 12h-2M224 10.5l-1.5 1.5 1.5 1.5" fill="none" stroke="#777"/><g fill="none" stroke="#bbb" stroke-width="1.1"><path d="M241.5 6.5h13M246 6.5V4.5h4v2M243 6.5l1 11.5h8l1-11.5M246.5 9v7M249.5 9v7"/></g></svg>
<div class="a" style="left:1177px;top:574px;width:257px;height:322px;background:#3f3f3f;"></div>
<div class="a" style="left:1422px;top:574px;width:12px;height:322px;background:#444444;"></div>
<div class="a" style="left:1178px;top:574px;width:244px;height:1px;background:#2a2a2a;"></div>
<div class="a" style="left:1216px;top:575px;width:206px;height:40px;background:#5f6a82;"></div>
<div class="a" style="left:1178px;top:615px;width:244px;height:1px;background:#2a2a2a;"></div>
<div class="a" style="left:1197px;top:575px;width:1px;height:40px;background:#2a2a2a;"></div>
<div class="a" style="left:1216px;top:575px;width:1px;height:40px;background:#2a2a2a;"></div>
<div class="a" style="left:1221px;top:577px;width:28px;height:36px;background:#fff;border:1px solid #ddd;"></div>
<div class="a" style="left:1223px;top:579px;width:24px;height:32px;background:#fff;background-image:linear-gradient(45deg,#ccc 25%,transparent 25%,transparent 75%,#ccc 75%),linear-gradient(45deg,#ccc 25%,transparent 25%,transparent 75%,#ccc 75%);background-size:8px 8px;background-position:0 0,4px 4px;border:1px solid #222;"></div>
<svg class="a" style="left:1228px;top:587px;" width="14" height="10" viewBox="0 0 14 10"><path d="M9 5L4 6.5C2 7 2 5 2.5 4L8 3C10 3 10 7 8 7.5L7 8c-1 0-1 1 0 2" fill="none" stroke="#666" stroke-width="1.5"/></svg>
<div class="a" style="left:1260px;top:579px;width:18px;height:19px;background:#fff;border:1px solid #222;border-radius:2px;"></div>
<svg class="a" style="left:1260px;top:579px;" width="18" height="19" viewBox="0 0 18 19"><rect x="2.5" y="2.5" width="13" height="14" rx="2" fill="none" stroke="#444"/><path d="M5.5 7l3.5-2 3.5 2v5l-3.5 2-3.5-2z M5.5 7l3.5 2 3.5-2M9 9v5" fill="none" stroke="#444" stroke-width="0.9"/></svg>
<div id="m43" class="a t" style="left:1283px;top:580px;font-size:12px;color:#e8e8e8;transform:scaleX(0.879);transform-origin:0 0;">100 %通常</div>
<div id="m44" class="a t" style="left:1257px;top:600px;font-size:12px;color:#e8e8e8;transform:scaleX(0.796);transform-origin:0 0;">レイヤー 2 のコピー</div>
<div class="a" style="left:1178px;top:655px;width:244px;height:1px;background:#2a2a2a;"></div>
<div class="a" style="left:1197px;top:615px;width:1px;height:40px;background:#2a2a2a;"></div>
<div class="a" style="left:1216px;top:615px;width:1px;height:40px;background:#2a2a2a;"></div>
<div class="a" style="left:1223px;top:619px;width:24px;height:32px;background:#fff;background-image:linear-gradient(45deg,#ccc 25%,transparent 25%,transparent 75%,#ccc 75%),linear-gradient(45deg,#ccc 25%,transparent 25%,transparent 75%,#ccc 75%);background-size:8px 8px;background-position:0 0,4px 4px;border:1px solid #222;"></div>
<svg class="a" style="left:1228px;top:627px;" width="14" height="10" viewBox="0 0 14 10"><path d="M9 5L4 6.5C2 7 2 5 2.5 4L8 3C10 3 10 7 8 7.5L7 8c-1 0-1 1 0 2" fill="none" stroke="#666" stroke-width="1.5"/></svg>
<div class="a" style="left:1260px;top:619px;width:18px;height:19px;background:#fff;border:1px solid #222;border-radius:2px;"></div>
<svg class="a" style="left:1260px;top:619px;" width="18" height="19" viewBox="0 0 18 19"><rect x="2.5" y="2.5" width="13" height="14" rx="2" fill="none" stroke="#444"/><path d="M5.5 7l3.5-2 3.5 2v5l-3.5 2-3.5-2z M5.5 7l3.5 2 3.5-2M9 9v5" fill="none" stroke="#444" stroke-width="0.9"/></svg>
<div id="m45" class="a t" style="left:1283px;top:620px;font-size:12px;color:#e8e8e8;transform:scaleX(0.879);transform-origin:0 0;">100 %通常</div>
<div id="m46" class="a t" style="left:1257px;top:640px;font-size:12px;color:#e8e8e8;transform:scaleX(0.793);transform-origin:0 0;">レイヤー 2</div>
<div class="a" style="left:1178px;top:696px;width:244px;height:1px;background:#2a2a2a;"></div>
<div class="a" style="left:1197px;top:656px;width:1px;height:40px;background:#2a2a2a;"></div>
<div class="a" style="left:1216px;top:656px;width:1px;height:40px;background:#2a2a2a;"></div>
<div class="a" style="left:1223px;top:660px;width:24px;height:32px;background:#fff;border:1px solid #222;"></div>
<div class="a" style="left:1260px;top:660px;width:18px;height:19px;background:#fff;border:1px solid #222;border-radius:2px;"></div>
<svg class="a" style="left:1260px;top:660px;" width="18" height="19" viewBox="0 0 18 19"><path d="M5.5 3.5h7v12h-5l-2-2z" fill="none" stroke="#444"/><path d="M5.5 13.5l2 2v-2z" fill="#444"/></svg>
<div id="m47" class="a t" style="left:1256px;top:681px;font-size:13px;color:#e8e8e8;transform:scaleX(0.923);transform-origin:0 0;">用紙</div>
<svg class="a" style="left:1178px;top:575px;" width="38" height="122" viewBox="0 0 38 122"><path d="M2.2 19c2.5-3.2 5-4.3 7.3-4.3s4.8 1.1 7.3 4.3" fill="none" stroke="#c8c8c8" stroke-width="1.3"/><path d="M4 19.5c1.8 1.8 3.6 2.4 5.5 2.4s3.7-0.6 5.5-2.4" fill="none" stroke="#c8c8c8" stroke-width="0.8"/><circle cx="9.5" cy="19" r="3.1" fill="#c8c8c8"/><path d="M20.5 26.5h15" stroke="#c8c8c8" stroke-width="1.2"/><path d="M21.5 25l1-3.5 9-8.5 2.5 2.5-9 8.5z" fill="#c8c8c8"/><rect x="3.7" y="55.5" width="11" height="10.5" rx="2.5" fill="none" stroke="#2e2e2e" stroke-width="1.5"/><rect x="23.7" y="55.5" width="11" height="10.5" rx="2.5" fill="none" stroke="#2e2e2e" stroke-width="1.5"/><path d="M2.2 101c2.5-3.2 5-4.3 7.3-4.3s4.8 1.1 7.3 4.3" fill="none" stroke="#c8c8c8" stroke-width="1.3"/><path d="M4 101.5c1.8 1.8 3.6 2.4 5.5 2.4s3.7-0.6 5.5-2.4" fill="none" stroke="#c8c8c8" stroke-width="0.8"/><circle cx="9.5" cy="101" r="3.1" fill="#c8c8c8"/><rect x="23.7" y="96.5" width="11" height="10.5" rx="2.5" fill="none" stroke="#2e2e2e" stroke-width="1.5"/></svg></body></html>
